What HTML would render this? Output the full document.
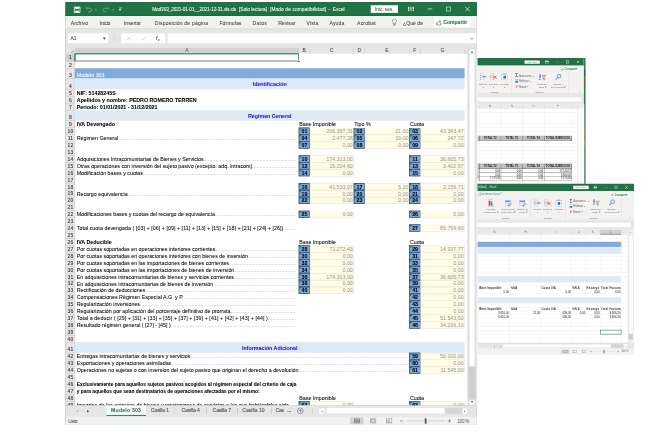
<!DOCTYPE html>
<html lang="es"><head><meta charset="utf-8"><title>Mod303 - Excel</title>
<style>
html{font-size:8px}
body{margin:0;background:#fff;width:650px;height:433px;overflow:hidden;position:relative;font-family:"Liberation Sans",sans-serif}
#stage{position:absolute;left:0;top:0;width:650rem;height:433rem;transform:scale(.125);transform-origin:0 0;overflow:hidden}
#stage div,#stage span,#stage svg{position:absolute;box-sizing:border-box}
.t{white-space:pre;-webkit-text-stroke:.05rem}
.t.s{-webkit-text-stroke:0}
.cell{white-space:nowrap;overflow:hidden;-webkit-text-stroke:.05rem}
</style></head>
<body>
<div id="stage">
<div id="w2" style="left:0;top:0;width:650rem;height:433rem">
<div style="left:583.4rem;top:58rem;width:2.1rem;height:128rem;background:#2a7a4d;"></div>
<div style="left:583.9rem;top:128rem;width:1.4rem;height:6rem;background:#8a6d3b;"></div>
<div style="left:583.9rem;top:139rem;width:1.4rem;height:7rem;background:#9b7a45;"></div>
<div style="left:583.9rem;top:70rem;width:1.4rem;height:6rem;background:#4a4a6a;"></div>
<div style="left:583.9rem;top:80rem;width:1.4rem;height:4rem;background:#7a5a3a;"></div>
<div style="left:476.6rem;top:58rem;width:107rem;height:128rem;background:#fff;"></div>
<div style="left:476.6rem;top:58rem;width:107rem;height:7.6rem;background:#217346;"></div>
<div style="left:524.6rem;top:60.5rem;width:15.2rem;height:3.2rem;background:#fff;"></div>
<span class="t s" style="top:60.7rem;font-size:2.5rem;line-height:3rem;color:#217346;left:527.2rem;letter-spacing:0.01rem;">Inic. ses.</span>
<div style="left:545.5rem;top:60.7rem;width:3rem;height:2.5rem;border:.45rem solid #fff"></div>
<div style="left:545.5rem;top:61.3rem;width:3rem;height:0.6rem;background:#fff;"></div>
<div style="left:556rem;top:61.75rem;width:2.8rem;height:0.45rem;background:#5f9c7a;"></div>
<div style="left:566.2rem;top:60.6rem;width:2.8rem;height:2.7rem;border:.45rem solid #fff"></div>
<svg style="left:576.5rem;top:60.4rem;width:3rem;height:3rem" viewBox="0 0 30 30"><path d="M3 3l24 24M27 3l-24 24" stroke="#fff" stroke-width="5"/></svg>
<div style="left:476.6rem;top:65.6rem;width:107rem;height:28.4rem;background:#f3f2f1;"></div>
<div style="left:476.6rem;top:93.6rem;width:107rem;height:0.5rem;background:#d2d0ce;"></div>
<div style="left:559.6rem;top:67.5rem;width:19.6rem;height:3.7rem;background:#fff;"></div>
<span class="t s" style="top:67.78rem;font-size:2.7rem;line-height:3.24rem;color:#217346;font-weight:bold;left:564.6rem;letter-spacing:0.01rem;">Compartir</span>
<svg style="left:561rem;top:68rem;width:3rem;height:2.8rem" viewBox="0 0 60 60"><path d="M6 30v24h40v-24" fill="none" stroke="#217346" stroke-width="8"/><path d="M14 40c4-16 14-24 30-24M34 6l12 10l-12 10" fill="none" stroke="#217346" stroke-width="8"/></svg>
<div style="left:480.4rem;top:73.8rem;width:3.2rem;height:6.2rem;background:#fff;border:.35rem solid #7d7d7d"></div>
<div style="left:480.4rem;top:75.8rem;width:3.2rem;height:2.1rem;background:#cfe0f3;border:.3rem solid #7d7d7d"></div>
<div style="left:483.2rem;top:76.35rem;width:3rem;height:0.9rem;background:#3a7bc8;"></div>
<span class="t s" style="top:82.2rem;font-size:2.5rem;line-height:3rem;color:#6e6e6e;left:383rem;width:200rem;text-align:center;">Insertar</span>
<span class="t s" style="top:85.8rem;font-size:2rem;line-height:2.4rem;color:#6e6e6e;left:383rem;width:200rem;text-align:center;">▾</span>
<div style="left:490.8rem;top:73.8rem;width:3.2rem;height:6.2rem;background:#fff;border:.35rem solid #7d7d7d"></div>
<div style="left:490.8rem;top:75.8rem;width:3.2rem;height:2.1rem;background:#cfe0f3;border:.3rem solid #7d7d7d"></div>
<svg style="left:493rem;top:75.2rem;width:4rem;height:4rem" viewBox="0 0 40 40"><path d="M4 4l32 32M36 4l-32 32" stroke="#e03c31" stroke-width="8"/></svg>
<span class="t s" style="top:82.2rem;font-size:2.5rem;line-height:3rem;color:#6e6e6e;left:393.6rem;width:200rem;text-align:center;">Eliminar</span>
<span class="t s" style="top:85.8rem;font-size:2rem;line-height:2.4rem;color:#6e6e6e;left:393.6rem;width:200rem;text-align:center;">▾</span>
<div style="left:501.7rem;top:74.2rem;width:5.8rem;height:5.8rem;background:#fff;border:.35rem solid #7d7d7d"></div>
<div style="left:503.4rem;top:75.8rem;width:2.6rem;height:2.8rem;background:#2e75b6;"></div>
<div style="left:502.8rem;top:73.6rem;width:3.6rem;height:0.7rem;background:#5b9bd5;"></div>
<span class="t s" style="top:82.2rem;font-size:2.5rem;line-height:3rem;color:#6e6e6e;left:404.6rem;width:200rem;text-align:center;">Formato</span>
<span class="t s" style="top:85.8rem;font-size:2rem;line-height:2.4rem;color:#6e6e6e;left:404.6rem;width:200rem;text-align:center;">▾</span>
<span class="t s" style="top:90.8rem;font-size:2.5rem;line-height:3rem;color:#6e6e6e;left:394.3rem;width:200rem;text-align:center;">Celdas</span>
<div style="left:511.5rem;top:73.5rem;width:0.3rem;height:19rem;background:#cfcdcb;"></div>
<span class="t" style="top:73rem;font-size:4.5rem;line-height:5.4rem;color:#333;left:515.2rem;">Σ</span>
<span class="t s" style="top:74rem;font-size:3rem;line-height:3.6rem;color:#6e6e6e;left:519rem;letter-spacing:-0.16rem;">Autosuma</span>
<span class="t s" style="top:74.26rem;font-size:2.4rem;line-height:2.88rem;color:#666;left:533.4rem;">▾</span>
<div style="left:515.4rem;top:79.6rem;width:2.6rem;height:3rem;background:#fff;border:.3rem solid #777"></div>
<div style="left:515.4rem;top:80.9rem;width:2.6rem;height:1.7rem;background:#2e75b6;"></div>
<span class="t s" style="top:79.4rem;font-size:3rem;line-height:3.6rem;color:#6e6e6e;left:519rem;letter-spacing:-0.18rem;">Rellenar</span>
<span class="t s" style="top:79.66rem;font-size:2.4rem;line-height:2.88rem;color:#666;left:529.6rem;">▾</span>
<svg style="left:515.2rem;top:85rem;width:3.2rem;height:3rem" viewBox="0 0 32 30"><path d="M4 26l10-22h12l-10 22z" fill="#e0457b"/></svg>
<span class="t s" style="top:84.8rem;font-size:3rem;line-height:3.6rem;color:#6e6e6e;left:519rem;letter-spacing:-0.16rem;">Borrar</span>
<span class="t s" style="top:85.06rem;font-size:2.4rem;line-height:2.88rem;color:#666;left:527.4rem;">▾</span>
<span class="t s" style="top:74.18rem;font-size:2.88rem;line-height:3.45rem;color:#2e75b6;font-weight:bold;left:539.1rem;">A</span>
<span class="t s" style="top:77.18rem;font-size:2.88rem;line-height:3.45rem;color:#7030a0;font-weight:bold;left:539.1rem;">Z</span>
<svg style="left:541.6rem;top:75rem;width:4.4rem;height:5.6rem" viewBox="0 0 44 56"><path d="M3 5h38l-14 19v26l-10-7v-19z" fill="#f3f2f1" stroke="#555" stroke-width="5"/></svg>
<span class="t s" style="top:82.2rem;font-size:2.5rem;line-height:3rem;color:#6e6e6e;left:442.4rem;width:200rem;text-align:center;">Ordenar y</span>
<span class="t s" style="top:85.6rem;font-size:2.5rem;line-height:3rem;color:#6e6e6e;left:442.4rem;width:200rem;text-align:center;">filtrar ▾</span>
<svg style="left:555.1rem;top:73.8rem;width:6.6rem;height:6.6rem" viewBox="0 0 54 54"><circle cx="33" cy="20" r="15" fill="#fff" stroke="#2e75b6" stroke-width="6"/><path d="M22 31l-18 19" stroke="#2e75b6" stroke-width="8"/></svg>
<span class="t s" style="top:82.2rem;font-size:2.5rem;line-height:3rem;color:#6e6e6e;left:458.4rem;width:200rem;text-align:center;">Buscar y</span>
<span class="t s" style="top:85.6rem;font-size:2.5rem;line-height:3rem;color:#6e6e6e;left:458.4rem;width:200rem;text-align:center;">seleccionar ▾</span>
<span class="t s" style="top:90.8rem;font-size:2.5rem;line-height:3rem;color:#6e6e6e;left:439.6rem;width:200rem;text-align:center;">Edición</span>
<div style="left:568rem;top:73.5rem;width:0.3rem;height:19rem;background:#cfcdcb;"></div>
<span class="t s" style="top:90.64rem;font-size:2.6rem;line-height:3.12rem;color:#6e6e6e;left:480rem;width:200rem;text-align:center;">⌃</span>
<div style="left:476.6rem;top:94.1rem;width:107rem;height:10.3rem;background:#e6e6e6;"></div>
<div style="left:476.6rem;top:97.4rem;width:104.8rem;height:4.1rem;background:#fff;"></div>
<span class="t s" style="top:98.06rem;font-size:2.4rem;line-height:2.88rem;color:#6e6e6e;left:479.6rem;width:200rem;text-align:center;">⌄</span>
<div style="left:476.6rem;top:104.4rem;width:100.8rem;height:4.1rem;background:#e9e9e9;"></div>
<span class="t s" style="top:104.82rem;font-size:2.8rem;line-height:3.36rem;color:#6e6e6e;left:390rem;width:200rem;text-align:center;">M</span>
<span class="t s" style="top:104.82rem;font-size:2.8rem;line-height:3.36rem;color:#6e6e6e;left:411.8rem;width:200rem;text-align:center;">N</span>
<span class="t s" style="top:104.82rem;font-size:2.8rem;line-height:3.36rem;color:#6e6e6e;left:433.4rem;width:200rem;text-align:center;">O</span>
<span class="t s" style="top:104.82rem;font-size:2.8rem;line-height:3.36rem;color:#6e6e6e;left:458rem;width:200rem;text-align:center;">P</span>
<div style="left:479.08rem;top:104.8rem;width:0.24rem;height:3.7rem;background:#bdbdbd;"></div>
<div style="left:500.88rem;top:104.8rem;width:0.24rem;height:3.7rem;background:#bdbdbd;"></div>
<div style="left:522.38rem;top:104.8rem;width:0.24rem;height:3.7rem;background:#bdbdbd;"></div>
<div style="left:543.98rem;top:104.8rem;width:0.24rem;height:3.7rem;background:#bdbdbd;"></div>
<div style="left:571.68rem;top:104.8rem;width:0.24rem;height:3.7rem;background:#bdbdbd;"></div>
<div style="left:476.6rem;top:108.4rem;width:100.8rem;height:0.2rem;background:#dadada;"></div>
<div style="left:476.6rem;top:112.25rem;width:100.8rem;height:0.2rem;background:#dadada;"></div>
<div style="left:476.6rem;top:116.1rem;width:100.8rem;height:0.2rem;background:#dadada;"></div>
<div style="left:476.6rem;top:119.95rem;width:100.8rem;height:0.2rem;background:#dadada;"></div>
<div style="left:476.6rem;top:123.8rem;width:100.8rem;height:0.2rem;background:#dadada;"></div>
<div style="left:476.6rem;top:127.65rem;width:100.8rem;height:0.2rem;background:#dadada;"></div>
<div style="left:476.6rem;top:131.5rem;width:100.8rem;height:0.2rem;background:#dadada;"></div>
<div style="left:476.6rem;top:135.35rem;width:100.8rem;height:0.2rem;background:#dadada;"></div>
<div style="left:476.6rem;top:139.2rem;width:100.8rem;height:0.2rem;background:#dadada;"></div>
<div style="left:476.6rem;top:143.05rem;width:100.8rem;height:0.2rem;background:#dadada;"></div>
<div style="left:476.6rem;top:146.9rem;width:100.8rem;height:0.2rem;background:#dadada;"></div>
<div style="left:476.6rem;top:150.75rem;width:100.8rem;height:0.2rem;background:#dadada;"></div>
<div style="left:476.6rem;top:154.6rem;width:100.8rem;height:0.2rem;background:#dadada;"></div>
<div style="left:476.6rem;top:158.45rem;width:100.8rem;height:0.2rem;background:#dadada;"></div>
<div style="left:476.6rem;top:162.3rem;width:100.8rem;height:0.2rem;background:#dadada;"></div>
<div style="left:476.6rem;top:166.15rem;width:100.8rem;height:0.2rem;background:#dadada;"></div>
<div style="left:476.6rem;top:170rem;width:100.8rem;height:0.2rem;background:#dadada;"></div>
<div style="left:476.6rem;top:173.85rem;width:100.8rem;height:0.2rem;background:#dadada;"></div>
<div style="left:476.6rem;top:177.7rem;width:100.8rem;height:0.2rem;background:#dadada;"></div>
<div style="left:476.6rem;top:181.55rem;width:100.8rem;height:0.2rem;background:#dadada;"></div>
<div style="left:479.1rem;top:108.5rem;width:0.2rem;height:75.5rem;background:#dadada;"></div>
<div style="left:500.9rem;top:108.5rem;width:0.2rem;height:75.5rem;background:#dadada;"></div>
<div style="left:522.4rem;top:108.5rem;width:0.2rem;height:75.5rem;background:#dadada;"></div>
<div style="left:544rem;top:108.5rem;width:0.2rem;height:75.5rem;background:#dadada;"></div>
<div style="left:571.7rem;top:108.5rem;width:0.2rem;height:75.5rem;background:#dadada;"></div>
<div style="left:577.4rem;top:104.4rem;width:6rem;height:81.6rem;background:#fff;"></div>
<div style="left:577.4rem;top:104.4rem;width:6rem;height:4.1rem;background:#ececec;"></div>
<div style="left:577.3rem;top:104.4rem;width:0.3rem;height:81.6rem;background:#c8c8c8;"></div>
<div style="left:580.6rem;top:108.5rem;width:0.3rem;height:77.5rem;background:#dedede;"></div>
<div style="left:476.6rem;top:135.8rem;width:95.3rem;height:5rem;background:#bfbfbf;border-top:.3rem solid #333;border-bottom:.3rem solid #333"></div>
<div style="left:479.05rem;top:135.8rem;width:0.3rem;height:5rem;background:#333;"></div>
<div style="left:500.85rem;top:135.8rem;width:0.3rem;height:5rem;background:#333;"></div>
<div style="left:522.35rem;top:135.8rem;width:0.3rem;height:5rem;background:#333;"></div>
<div style="left:543.95rem;top:135.8rem;width:0.3rem;height:5rem;background:#333;"></div>
<div style="left:571.65rem;top:135.8rem;width:0.3rem;height:5rem;background:#333;"></div>
<span class="t s" style="top:136.77rem;font-size:2.72rem;line-height:3.26rem;color:#222;font-weight:bold;left:390.1rem;width:200rem;text-align:center;">TOTAL T2</span>
<span class="t s" style="top:136.77rem;font-size:2.72rem;line-height:3.26rem;color:#222;font-weight:bold;left:411.75rem;width:200rem;text-align:center;">TOTAL T3</span>
<span class="t s" style="top:136.77rem;font-size:2.72rem;line-height:3.26rem;color:#222;font-weight:bold;left:433.3rem;width:200rem;text-align:center;">TOTAL T4</span>
<span class="t s" style="top:136.77rem;font-size:2.72rem;line-height:3.26rem;color:#222;font-weight:bold;left:457.95rem;width:200rem;text-align:center;">TOTAL EJERCICIO</span>
<div style="left:476.6rem;top:163.6rem;width:95.3rem;height:5.4rem;background:#bfbfbf;border-top:.3rem solid #333;border-bottom:.3rem solid #333"></div>
<div style="left:479.05rem;top:163.6rem;width:0.3rem;height:5.4rem;background:#333;"></div>
<div style="left:500.85rem;top:163.6rem;width:0.3rem;height:5.4rem;background:#333;"></div>
<div style="left:522.35rem;top:163.6rem;width:0.3rem;height:5.4rem;background:#333;"></div>
<div style="left:543.95rem;top:163.6rem;width:0.3rem;height:5.4rem;background:#333;"></div>
<div style="left:571.65rem;top:163.6rem;width:0.3rem;height:5.4rem;background:#333;"></div>
<span class="t s" style="top:164.77rem;font-size:2.72rem;line-height:3.26rem;color:#222;font-weight:bold;left:390.1rem;width:200rem;text-align:center;">TOTAL T2</span>
<span class="t s" style="top:164.77rem;font-size:2.72rem;line-height:3.26rem;color:#222;font-weight:bold;left:411.75rem;width:200rem;text-align:center;">TOTAL T3</span>
<span class="t s" style="top:164.77rem;font-size:2.72rem;line-height:3.26rem;color:#222;font-weight:bold;left:433.3rem;width:200rem;text-align:center;">TOTAL T4</span>
<span class="t s" style="top:164.77rem;font-size:2.72rem;line-height:3.26rem;color:#222;font-weight:bold;left:457.95rem;width:200rem;text-align:center;">TOTAL EJERCICIO</span>
<div style="left:476.6rem;top:172.65rem;width:95.3rem;height:0.3rem;background:#444;"></div>
<div style="left:479.05rem;top:169rem;width:0.3rem;height:3.8rem;background:#444;"></div>
<div style="left:500.85rem;top:169rem;width:0.3rem;height:3.8rem;background:#444;"></div>
<div style="left:522.35rem;top:169rem;width:0.3rem;height:3.8rem;background:#444;"></div>
<div style="left:543.95rem;top:169rem;width:0.3rem;height:3.8rem;background:#444;"></div>
<div style="left:571.65rem;top:169rem;width:0.3rem;height:3.8rem;background:#444;"></div>
<span class="t s" style="top:169.44rem;font-size:2.6rem;line-height:3.12rem;color:#222;left:300.2rem;width:200rem;text-align:right;">0,00</span>
<span class="t s" style="top:169.44rem;font-size:2.6rem;line-height:3.12rem;color:#222;left:321.7rem;width:200rem;text-align:right;">0,00</span>
<span class="t s" style="top:169.44rem;font-size:2.6rem;line-height:3.12rem;color:#222;left:343.3rem;width:200rem;text-align:right;">0,00</span>
<span class="t s" style="top:169.44rem;font-size:2.6rem;line-height:3.12rem;color:#222;left:371rem;width:200rem;text-align:right;">17.140,72</span>
<span class="t s" style="top:169.44rem;font-size:2.6rem;line-height:3.12rem;color:#222;left:278.8rem;width:200rem;text-align:right;">72</span>
<div style="left:476.6rem;top:176.45rem;width:95.3rem;height:0.3rem;background:#444;"></div>
<div style="left:479.05rem;top:172.8rem;width:0.3rem;height:3.8rem;background:#444;"></div>
<div style="left:500.85rem;top:172.8rem;width:0.3rem;height:3.8rem;background:#444;"></div>
<div style="left:522.35rem;top:172.8rem;width:0.3rem;height:3.8rem;background:#444;"></div>
<div style="left:543.95rem;top:172.8rem;width:0.3rem;height:3.8rem;background:#444;"></div>
<div style="left:571.65rem;top:172.8rem;width:0.3rem;height:3.8rem;background:#444;"></div>
<span class="t s" style="top:173.24rem;font-size:2.6rem;line-height:3.12rem;color:#222;left:300.2rem;width:200rem;text-align:right;">0,00</span>
<span class="t s" style="top:173.24rem;font-size:2.6rem;line-height:3.12rem;color:#222;left:321.7rem;width:200rem;text-align:right;">0,00</span>
<span class="t s" style="top:173.24rem;font-size:2.6rem;line-height:3.12rem;color:#222;left:343.3rem;width:200rem;text-align:right;">0,00</span>
<span class="t s" style="top:173.24rem;font-size:2.6rem;line-height:3.12rem;color:#222;left:371rem;width:200rem;text-align:right;">3.600,00</span>
<span class="t s" style="top:173.24rem;font-size:2.6rem;line-height:3.12rem;color:#222;left:278.8rem;width:200rem;text-align:right;">00</span>
<div style="left:476.6rem;top:180.25rem;width:95.3rem;height:0.3rem;background:#444;"></div>
<div style="left:479.05rem;top:176.6rem;width:0.3rem;height:3.8rem;background:#444;"></div>
<div style="left:500.85rem;top:176.6rem;width:0.3rem;height:3.8rem;background:#444;"></div>
<div style="left:522.35rem;top:176.6rem;width:0.3rem;height:3.8rem;background:#444;"></div>
<div style="left:543.95rem;top:176.6rem;width:0.3rem;height:3.8rem;background:#444;"></div>
<div style="left:571.65rem;top:176.6rem;width:0.3rem;height:3.8rem;background:#444;"></div>
<span class="t s" style="top:177.04rem;font-size:2.6rem;line-height:3.12rem;color:#222;left:300.2rem;width:200rem;text-align:right;">7.175,30</span>
<span class="t s" style="top:177.04rem;font-size:2.6rem;line-height:3.12rem;color:#222;left:321.7rem;width:200rem;text-align:right;">0,00</span>
<span class="t s" style="top:177.04rem;font-size:2.6rem;line-height:3.12rem;color:#222;left:343.3rem;width:200rem;text-align:right;">0,00</span>
<span class="t s" style="top:177.04rem;font-size:2.6rem;line-height:3.12rem;color:#222;left:371rem;width:200rem;text-align:right;">7.175,30</span>
<span class="t s" style="top:177.04rem;font-size:2.6rem;line-height:3.12rem;color:#222;left:278.8rem;width:200rem;text-align:right;">30</span>
</div>
<div id="w3" style="left:0;top:0;width:650rem;height:433rem">
<div style="left:476.6rem;top:183.5rem;width:157.4rem;height:170.7rem;background:#fff;border-right:.3rem solid #9cbfaa;border-bottom:.3rem solid #9cbfaa"></div>
<div style="left:476.6rem;top:183.5rem;width:157.4rem;height:7.7rem;background:#217346;"></div>
<div style="left:573.3rem;top:185.7rem;width:15.3rem;height:3.4rem;background:#fff;"></div>
<span class="t s" style="top:186rem;font-size:2.5rem;line-height:3rem;color:#217346;left:575.9rem;letter-spacing:0.02rem;">Inic. ses.</span>
<div style="left:593.9rem;top:186.25rem;width:3rem;height:2.5rem;border:.45rem solid #fff"></div>
<div style="left:593.9rem;top:186.85rem;width:3rem;height:0.6rem;background:#fff;"></div>
<div style="left:604.8rem;top:187.3rem;width:2.8rem;height:0.45rem;background:#5f9c7a;"></div>
<div style="left:614.8rem;top:186.15rem;width:2.8rem;height:2.7rem;border:.45rem solid #fff"></div>
<svg style="left:625rem;top:185.95rem;width:3rem;height:3rem" viewBox="0 0 30 30"><path d="M3 3l24 24M27 3l-24 24" stroke="#fff" stroke-width="5"/></svg>
<span class="t s" style="top:185.83rem;font-size:2.7rem;line-height:3.24rem;color:#cfe3d7;left:478rem;letter-spacing:-0.09rem;">ibilidad]  -  Excel</span>
<div style="left:476.6rem;top:191.2rem;width:157.1rem;height:29.1rem;background:#f3f2f1;"></div>
<div style="left:476.6rem;top:219.9rem;width:157.1rem;height:0.5rem;background:#d2d0ce;"></div>
<span class="t s" style="top:192.88rem;font-size:2.7rem;line-height:3.24rem;color:#6e6e6e;left:477.6rem;letter-spacing:0.01rem;">¿Qué desea hacer?</span>
<div style="left:609.4rem;top:192.6rem;width:20rem;height:4rem;background:#fff;"></div>
<span class="t s" style="top:193.08rem;font-size:2.7rem;line-height:3.24rem;color:#217346;font-weight:bold;left:614.6rem;letter-spacing:0.03rem;">Compartir</span>
<svg style="left:610.8rem;top:193.2rem;width:3rem;height:2.8rem" viewBox="0 0 60 60"><path d="M6 30v24h40v-24" fill="none" stroke="#217346" stroke-width="8"/><path d="M14 40c4-16 14-24 30-24M34 6l12 10l-12 10" fill="none" stroke="#217346" stroke-width="8"/></svg>
<div style="left:488.2rem;top:199.8rem;width:4.8rem;height:6.6rem;background:#fff;border:.35rem solid #7d7d7d"></div>
<div style="left:488.8rem;top:200.6rem;width:1.6rem;height:5rem;background:#e8413c;"></div>
<div style="left:490.6rem;top:201.4rem;width:1.4rem;height:4.2rem;background:#3a7bc8;"></div>
<svg style="left:491.4rem;top:203.6rem;width:3rem;height:3rem" viewBox="0 0 30 30"><path d="M4 26l8-22l14 22z" fill="#fff" stroke="#555" stroke-width="3"/></svg>
<span class="t s" style="top:207.3rem;font-size:2.5rem;line-height:3rem;color:#6e6e6e;left:390.8rem;width:200rem;text-align:center;">Formato</span>
<span class="t s" style="top:210.6rem;font-size:2.5rem;line-height:3rem;color:#6e6e6e;left:390.8rem;width:200rem;text-align:center;">condicional ▾</span>
<div style="left:505.2rem;top:200.6rem;width:5.2rem;height:5rem;background:#fff;border:.35rem solid #7d7d7d"></div>
<div style="left:505.2rem;top:200.6rem;width:5.2rem;height:1.6rem;background:#5b9bd5;"></div>
<div style="left:505.2rem;top:203.4rem;width:5.2rem;height:1rem;background:#bdd7ee;"></div>
<svg style="left:507.8rem;top:202.4rem;width:4.4rem;height:4.4rem" viewBox="0 0 44 44"><path d="M4 40l6-14l20-20l8 8l-20 20z" fill="#dfe7f2" stroke="#555" stroke-width="4"/><path d="M4 40l6-14l8 8z" fill="#2e75b6"/></svg>
<span class="t s" style="top:207.3rem;font-size:2.5rem;line-height:3rem;color:#6e6e6e;left:408.2rem;width:200rem;text-align:center;">Dar formato</span>
<span class="t s" style="top:210.6rem;font-size:2.5rem;line-height:3rem;color:#6e6e6e;left:408.2rem;width:200rem;text-align:center;">como tabla ▾</span>
<div style="left:519.8rem;top:200.6rem;width:5.2rem;height:5rem;background:#fff;border:.35rem solid #7d7d7d"></div>
<div style="left:519.8rem;top:200.6rem;width:5.2rem;height:1.6rem;background:#5b9bd5;"></div>
<div style="left:519.8rem;top:203.4rem;width:5.2rem;height:1rem;background:#bdd7ee;"></div>
<svg style="left:522.4rem;top:202.4rem;width:4.4rem;height:4.4rem" viewBox="0 0 44 44"><path d="M4 40l6-14l20-20l8 8l-20 20z" fill="#dfe7f2" stroke="#555" stroke-width="4"/><path d="M4 40l6-14l8 8z" fill="#2e75b6"/></svg>
<span class="t s" style="top:207.3rem;font-size:2.5rem;line-height:3rem;color:#6e6e6e;left:422.8rem;width:200rem;text-align:center;">Estilos de</span>
<span class="t s" style="top:210.6rem;font-size:2.5rem;line-height:3rem;color:#6e6e6e;left:422.8rem;width:200rem;text-align:center;">celda ▾</span>
<span class="t s" style="top:216.6rem;font-size:2.5rem;line-height:3rem;color:#6e6e6e;left:405.4rem;width:200rem;text-align:center;">Estilos</span>
<div style="left:530.3rem;top:199.5rem;width:0.3rem;height:19rem;background:#cfcdcb;"></div>
<div style="left:534.7rem;top:200rem;width:3.2rem;height:6.2rem;background:#fff;border:.35rem solid #7d7d7d"></div>
<div style="left:534.7rem;top:202rem;width:3.2rem;height:2.1rem;background:#cfe0f3;border:.3rem solid #7d7d7d"></div>
<div style="left:537.5rem;top:202.55rem;width:3rem;height:0.9rem;background:#3a7bc8;"></div>
<span class="t s" style="top:207.3rem;font-size:2.5rem;line-height:3rem;color:#6e6e6e;left:437.3rem;width:200rem;text-align:center;">Insertar</span>
<span class="t s" style="top:211rem;font-size:2rem;line-height:2.4rem;color:#6e6e6e;left:437.3rem;width:200rem;text-align:center;">▾</span>
<div style="left:544.9rem;top:200rem;width:3.2rem;height:6.2rem;background:#fff;border:.35rem solid #7d7d7d"></div>
<div style="left:544.9rem;top:202rem;width:3.2rem;height:2.1rem;background:#cfe0f3;border:.3rem solid #7d7d7d"></div>
<svg style="left:547.1rem;top:201.4rem;width:4rem;height:4rem" viewBox="0 0 40 40"><path d="M4 4l32 32M36 4l-32 32" stroke="#e03c31" stroke-width="8"/></svg>
<span class="t s" style="top:207.3rem;font-size:2.5rem;line-height:3rem;color:#6e6e6e;left:447.7rem;width:200rem;text-align:center;">Eliminar</span>
<span class="t s" style="top:211rem;font-size:2rem;line-height:2.4rem;color:#6e6e6e;left:447.7rem;width:200rem;text-align:center;">▾</span>
<div style="left:555.9rem;top:200.4rem;width:5.8rem;height:5.8rem;background:#fff;border:.35rem solid #7d7d7d"></div>
<div style="left:557.6rem;top:202rem;width:2.6rem;height:2.8rem;background:#2e75b6;"></div>
<div style="left:557rem;top:199.8rem;width:3.6rem;height:0.7rem;background:#5b9bd5;"></div>
<span class="t s" style="top:207.3rem;font-size:2.5rem;line-height:3rem;color:#6e6e6e;left:458.8rem;width:200rem;text-align:center;">Formato</span>
<span class="t s" style="top:211rem;font-size:2rem;line-height:2.4rem;color:#6e6e6e;left:458.8rem;width:200rem;text-align:center;">▾</span>
<span class="t s" style="top:216.6rem;font-size:2.5rem;line-height:3rem;color:#6e6e6e;left:447.7rem;width:200rem;text-align:center;">Celdas</span>
<div style="left:565.4rem;top:199.5rem;width:0.3rem;height:19rem;background:#cfcdcb;"></div>
<span class="t" style="top:198.3rem;font-size:4.5rem;line-height:5.4rem;color:#333;left:569.4rem;">Σ</span>
<span class="t s" style="top:199.3rem;font-size:3rem;line-height:3.6rem;color:#6e6e6e;left:573.2rem;letter-spacing:-0.16rem;">Autosuma</span>
<span class="t s" style="top:199.56rem;font-size:2.4rem;line-height:2.88rem;color:#666;left:587.6rem;">▾</span>
<div style="left:569.6rem;top:204.8rem;width:2.6rem;height:3rem;background:#fff;border:.3rem solid #777"></div>
<div style="left:569.6rem;top:206.1rem;width:2.6rem;height:1.7rem;background:#2e75b6;"></div>
<span class="t s" style="top:204.6rem;font-size:3rem;line-height:3.6rem;color:#6e6e6e;left:573.2rem;letter-spacing:-0.18rem;">Rellenar</span>
<span class="t s" style="top:204.86rem;font-size:2.4rem;line-height:2.88rem;color:#666;left:583.8rem;">▾</span>
<svg style="left:569.4rem;top:210.1rem;width:3.2rem;height:3rem" viewBox="0 0 32 30"><path d="M4 26l10-22h12l-10 22z" fill="#e0457b"/></svg>
<span class="t s" style="top:209.9rem;font-size:3rem;line-height:3.6rem;color:#6e6e6e;left:573.2rem;letter-spacing:-0.16rem;">Borrar</span>
<span class="t s" style="top:210.16rem;font-size:2.4rem;line-height:2.88rem;color:#666;left:581.6rem;">▾</span>
<span class="t s" style="top:199.58rem;font-size:2.88rem;line-height:3.45rem;color:#2e75b6;font-weight:bold;left:592.9rem;">A</span>
<span class="t s" style="top:202.58rem;font-size:2.88rem;line-height:3.45rem;color:#7030a0;font-weight:bold;left:592.9rem;">Z</span>
<svg style="left:595.4rem;top:200.4rem;width:4.4rem;height:5.6rem" viewBox="0 0 44 56"><path d="M3 5h38l-14 19v26l-10-7v-19z" fill="#f3f2f1" stroke="#555" stroke-width="5"/></svg>
<span class="t s" style="top:207.3rem;font-size:2.5rem;line-height:3rem;color:#6e6e6e;left:496.2rem;width:200rem;text-align:center;">Ordenar y</span>
<span class="t s" style="top:210.6rem;font-size:2.5rem;line-height:3rem;color:#6e6e6e;left:496.2rem;width:200rem;text-align:center;">filtrar ▾</span>
<svg style="left:608.7rem;top:199.2rem;width:6.6rem;height:6.6rem" viewBox="0 0 54 54"><circle cx="33" cy="20" r="15" fill="#fff" stroke="#2e75b6" stroke-width="6"/><path d="M22 31l-18 19" stroke="#2e75b6" stroke-width="8"/></svg>
<span class="t s" style="top:207.3rem;font-size:2.5rem;line-height:3rem;color:#6e6e6e;left:512rem;width:200rem;text-align:center;">Buscar y</span>
<span class="t s" style="top:210.6rem;font-size:2.5rem;line-height:3rem;color:#6e6e6e;left:512rem;width:200rem;text-align:center;">seleccionar ▾</span>
<span class="t s" style="top:216.6rem;font-size:2.5rem;line-height:3rem;color:#6e6e6e;left:493.4rem;width:200rem;text-align:center;">Edición</span>
<div style="left:621.7rem;top:199.5rem;width:0.3rem;height:19rem;background:#cfcdcb;"></div>
<span class="t s" style="top:216.66rem;font-size:2.4rem;line-height:2.88rem;color:#777;left:379rem;width:200rem;text-align:center;">⌟</span>
<span class="t s" style="top:216.44rem;font-size:2.6rem;line-height:3.12rem;color:#6e6e6e;left:530rem;width:200rem;text-align:center;">⌃</span>
<div style="left:476.6rem;top:220.4rem;width:157.1rem;height:9.4rem;background:#e6e6e6;"></div>
<div style="left:476.6rem;top:222.5rem;width:154rem;height:4.8rem;background:#fff;"></div>
<span class="t s" style="top:223.56rem;font-size:2.4rem;line-height:2.88rem;color:#6e6e6e;left:529rem;width:200rem;text-align:center;">⌄</span>
<div style="left:476.6rem;top:229.8rem;width:151.2rem;height:4.6rem;background:#e9e9e9;"></div>
<div style="left:600.2rem;top:229.8rem;width:20.8rem;height:4.6rem;background:#d2d2d2;"></div>
<div style="left:600.2rem;top:233.9rem;width:20.8rem;height:0.6rem;background:#217346;"></div>
<span class="t s" style="top:230.42rem;font-size:2.8rem;line-height:3.36rem;color:#6e6e6e;left:394.4rem;width:200rem;text-align:center;">G</span>
<span class="t s" style="top:230.42rem;font-size:2.8rem;line-height:3.36rem;color:#6e6e6e;left:425.4rem;width:200rem;text-align:center;">H</span>
<span class="t s" style="top:230.42rem;font-size:2.8rem;line-height:3.36rem;color:#6e6e6e;left:456.4rem;width:200rem;text-align:center;">I</span>
<span class="t s" style="top:230.42rem;font-size:2.8rem;line-height:3.36rem;color:#6e6e6e;left:478.8rem;width:200rem;text-align:center;">J</span>
<span class="t s" style="top:230.42rem;font-size:2.8rem;line-height:3.36rem;color:#6e6e6e;left:493rem;width:200rem;text-align:center;">K</span>
<span class="t s" style="top:230.42rem;font-size:2.8rem;line-height:3.36rem;color:#6e6e6e;left:510.6rem;width:200rem;text-align:center;">L</span>
<div style="left:478.18rem;top:230.2rem;width:0.24rem;height:4.2rem;background:#bdbdbd;"></div>
<div style="left:509.48rem;top:230.2rem;width:0.24rem;height:4.2rem;background:#bdbdbd;"></div>
<div style="left:540.48rem;top:230.2rem;width:0.24rem;height:4.2rem;background:#bdbdbd;"></div>
<div style="left:571.48rem;top:230.2rem;width:0.24rem;height:4.2rem;background:#bdbdbd;"></div>
<div style="left:585.68rem;top:230.2rem;width:0.24rem;height:4.2rem;background:#bdbdbd;"></div>
<div style="left:600.08rem;top:230.2rem;width:0.24rem;height:4.2rem;background:#bdbdbd;"></div>
<div style="left:620.88rem;top:230.2rem;width:0.24rem;height:4.2rem;background:#bdbdbd;"></div>
<div style="left:476.6rem;top:234.3rem;width:151.2rem;height:0.2rem;background:#dcdcdc;"></div>
<div style="left:476.6rem;top:238.05rem;width:151.2rem;height:0.2rem;background:#dcdcdc;"></div>
<div style="left:476.6rem;top:241.8rem;width:151.2rem;height:0.2rem;background:#dcdcdc;"></div>
<div style="left:476.6rem;top:246.8rem;width:151.2rem;height:0.2rem;background:#dcdcdc;"></div>
<div style="left:476.6rem;top:252.9rem;width:151.2rem;height:0.2rem;background:#dcdcdc;"></div>
<div style="left:476.6rem;top:256.75rem;width:151.2rem;height:0.2rem;background:#dcdcdc;"></div>
<div style="left:476.6rem;top:260.6rem;width:151.2rem;height:0.2rem;background:#dcdcdc;"></div>
<div style="left:476.6rem;top:264.45rem;width:151.2rem;height:0.2rem;background:#dcdcdc;"></div>
<div style="left:476.6rem;top:268.3rem;width:151.2rem;height:0.2rem;background:#dcdcdc;"></div>
<div style="left:476.6rem;top:272.15rem;width:151.2rem;height:0.2rem;background:#dcdcdc;"></div>
<div style="left:476.6rem;top:276rem;width:151.2rem;height:0.2rem;background:#dcdcdc;"></div>
<div style="left:476.6rem;top:282rem;width:151.2rem;height:0.2rem;background:#dcdcdc;"></div>
<div style="left:476.6rem;top:285.85rem;width:151.2rem;height:0.2rem;background:#dcdcdc;"></div>
<div style="left:476.6rem;top:289.7rem;width:151.2rem;height:0.2rem;background:#dcdcdc;"></div>
<div style="left:476.6rem;top:293.55rem;width:151.2rem;height:0.2rem;background:#dcdcdc;"></div>
<div style="left:476.6rem;top:297.4rem;width:151.2rem;height:0.2rem;background:#dcdcdc;"></div>
<div style="left:476.6rem;top:303.2rem;width:151.2rem;height:0.2rem;background:#dcdcdc;"></div>
<div style="left:476.6rem;top:307.05rem;width:151.2rem;height:0.2rem;background:#dcdcdc;"></div>
<div style="left:476.6rem;top:310.9rem;width:151.2rem;height:0.2rem;background:#dcdcdc;"></div>
<div style="left:476.6rem;top:314.75rem;width:151.2rem;height:0.2rem;background:#dcdcdc;"></div>
<div style="left:476.6rem;top:318.6rem;width:151.2rem;height:0.2rem;background:#dcdcdc;"></div>
<div style="left:476.6rem;top:322.45rem;width:151.2rem;height:0.2rem;background:#dcdcdc;"></div>
<div style="left:476.6rem;top:326.3rem;width:151.2rem;height:0.2rem;background:#dcdcdc;"></div>
<div style="left:476.6rem;top:330.15rem;width:151.2rem;height:0.2rem;background:#dcdcdc;"></div>
<div style="left:476.6rem;top:334rem;width:151.2rem;height:0.2rem;background:#dcdcdc;"></div>
<div style="left:476.6rem;top:337.85rem;width:151.2rem;height:0.2rem;background:#dcdcdc;"></div>
<div style="left:476.6rem;top:341.7rem;width:151.2rem;height:0.2rem;background:#dcdcdc;"></div>
<div style="left:478.2rem;top:234.4rem;width:0.2rem;height:108.6rem;background:#dcdcdc;"></div>
<div style="left:509.5rem;top:234.4rem;width:0.2rem;height:108.6rem;background:#dcdcdc;"></div>
<div style="left:540.5rem;top:234.4rem;width:0.2rem;height:108.6rem;background:#dcdcdc;"></div>
<div style="left:571.5rem;top:234.4rem;width:0.2rem;height:108.6rem;background:#dcdcdc;"></div>
<div style="left:585.7rem;top:234.4rem;width:0.2rem;height:108.6rem;background:#dcdcdc;"></div>
<div style="left:600.1rem;top:234.4rem;width:0.2rem;height:108.6rem;background:#dcdcdc;"></div>
<div style="left:620.9rem;top:234.4rem;width:0.2rem;height:108.6rem;background:#dcdcdc;"></div>
<div style="left:476.6rem;top:241.9rem;width:144.4rem;height:5rem;background:#7fabdb;"></div>
<div style="left:476.6rem;top:246.9rem;width:144.4rem;height:6.1rem;background:#deebf5;"></div>
<div style="left:476.6rem;top:276.1rem;width:144.4rem;height:6rem;background:#deebf5;"></div>
<div style="left:476.6rem;top:297.5rem;width:144.4rem;height:5.8rem;background:#deebf5;"></div>
<span class="t s" style="top:286.3rem;font-size:2.8rem;line-height:3.36rem;color:#333;font-weight:bold;left:479.2rem;letter-spacing:0.11rem;">Base Imponible</span>
<span class="t s" style="top:286.3rem;font-size:2.8rem;line-height:3.36rem;color:#333;font-weight:bold;left:510.4rem;letter-spacing:0.01rem;">%IVA</span>
<span class="t s" style="top:286.3rem;font-size:2.8rem;line-height:3.36rem;color:#333;font-weight:bold;left:541.4rem;letter-spacing:0.16rem;">Cuota IVA</span>
<span class="t s" style="top:286.3rem;font-size:2.8rem;line-height:3.36rem;color:#333;font-weight:bold;left:572.2rem;letter-spacing:0.05rem;">%R.E.</span>
<span class="t s" style="top:286.3rem;font-size:2.8rem;line-height:3.36rem;color:#333;font-weight:bold;left:586.6rem;letter-spacing:0.23rem;">Recargo</span>
<span class="t s" style="top:286.3rem;font-size:2.8rem;line-height:3.36rem;color:#333;font-weight:bold;left:601rem;letter-spacing:0.19rem;">Total Factura</span>
<span class="t s" style="top:290.12rem;font-size:2.85rem;line-height:3.42rem;color:#222;left:309.1rem;width:200rem;text-align:right;">0,00</span>
<span class="t s" style="top:290.12rem;font-size:2.85rem;line-height:3.42rem;color:#222;left:371.1rem;width:200rem;text-align:right;">0,00</span>
<span class="t s" style="top:290.12rem;font-size:2.85rem;line-height:3.42rem;color:#222;left:399.7rem;width:200rem;text-align:right;">0,00</span>
<span class="t s" style="top:290.12rem;font-size:2.85rem;line-height:3.42rem;color:#222;left:420.5rem;width:200rem;text-align:right;">0,00</span>
<span class="t s" style="top:307.5rem;font-size:2.8rem;line-height:3.36rem;color:#333;font-weight:bold;left:479.2rem;letter-spacing:0.11rem;">Base Imponible</span>
<span class="t s" style="top:307.5rem;font-size:2.8rem;line-height:3.36rem;color:#333;font-weight:bold;left:510.4rem;letter-spacing:0.01rem;">%IVA</span>
<span class="t s" style="top:307.5rem;font-size:2.8rem;line-height:3.36rem;color:#333;font-weight:bold;left:541.4rem;letter-spacing:0.16rem;">Cuota IVA</span>
<span class="t s" style="top:307.5rem;font-size:2.8rem;line-height:3.36rem;color:#333;font-weight:bold;left:572.2rem;letter-spacing:0.05rem;">%R.E.</span>
<span class="t s" style="top:307.5rem;font-size:2.8rem;line-height:3.36rem;color:#333;font-weight:bold;left:586.6rem;letter-spacing:0.23rem;">Recargo</span>
<span class="t s" style="top:307.5rem;font-size:2.8rem;line-height:3.36rem;color:#333;font-weight:bold;left:601rem;letter-spacing:0.19rem;">Total Factura</span>
<span class="t s" style="top:311.32rem;font-size:2.85rem;line-height:3.42rem;color:#222;left:309.1rem;width:200rem;text-align:right;">3.616,00</span>
<span class="t s" style="top:311.32rem;font-size:2.85rem;line-height:3.42rem;color:#222;left:340.1rem;width:200rem;text-align:right;">21,00</span>
<span class="t s" style="top:311.32rem;font-size:2.85rem;line-height:3.42rem;color:#222;left:371.1rem;width:200rem;text-align:right;">636,30</span>
<span class="t s" style="top:311.32rem;font-size:2.85rem;line-height:3.42rem;color:#222;left:385.3rem;width:200rem;text-align:right;">0,00</span>
<span class="t s" style="top:311.32rem;font-size:2.85rem;line-height:3.42rem;color:#222;left:399.7rem;width:200rem;text-align:right;">0,00</span>
<span class="t s" style="top:311.32rem;font-size:2.85rem;line-height:3.42rem;color:#222;left:420.5rem;width:200rem;text-align:right;">3.666,30</span>
<span class="t s" style="top:315.17rem;font-size:2.85rem;line-height:3.42rem;color:#222;left:309.1rem;width:200rem;text-align:right;">3.616,00</span>
<span class="t s" style="top:315.17rem;font-size:2.85rem;line-height:3.42rem;color:#222;left:371.1rem;width:200rem;text-align:right;">636,30</span>
<span class="t s" style="top:315.17rem;font-size:2.85rem;line-height:3.42rem;color:#222;left:399.7rem;width:200rem;text-align:right;">0,00</span>
<span class="t s" style="top:315.17rem;font-size:2.85rem;line-height:3.42rem;color:#222;left:420.5rem;width:200rem;text-align:right;">3.666,30</span>
<div style="left:600.1rem;top:329.75rem;width:21.3rem;height:4.55rem;border:.5rem solid #217346"></div>
<div style="left:627.8rem;top:229.8rem;width:5.9rem;height:113.2rem;background:#f0f0f0;"></div>
<div style="left:627.7rem;top:229.8rem;width:0.3rem;height:113.2rem;background:#c8c8c8;"></div>
<div style="left:628.6rem;top:235rem;width:4.4rem;height:99rem;background:#fff;border:.25rem solid #cfcfcf"></div>
<div style="left:628.6rem;top:334rem;width:4.4rem;height:5.8rem;background:#cdcdcd;"></div>
<div style="left:628.6rem;top:339.9rem;width:4.4rem;height:3.1rem;background:#fff;border:.25rem solid #cfcfcf"></div>
<span class="t s" style="top:230.88rem;font-size:2.2rem;line-height:2.64rem;color:#6e6e6e;left:530.8rem;width:200rem;text-align:center;">▴</span>
<span class="t s" style="top:340.18rem;font-size:2.2rem;line-height:2.64rem;color:#6e6e6e;left:530.8rem;width:200rem;text-align:center;">▾</span>
<div style="left:476.6rem;top:343rem;width:157.1rem;height:5.8rem;background:#e6e6e6;"></div>
<div style="left:476.6rem;top:342.9rem;width:157.1rem;height:0.3rem;background:#c8c8c8;"></div>
<div style="left:503rem;top:344.4rem;width:108rem;height:3.2rem;background:#fff;border:.2rem solid #d0d0d0"></div>
<span class="t s" style="top:344.44rem;font-size:2.6rem;line-height:3.12rem;color:#888;left:394.4rem;width:200rem;text-align:center;">⋮</span>
<span class="t s" style="top:344.68rem;font-size:2.2rem;line-height:2.64rem;color:#666;left:400.4rem;width:200rem;text-align:center;">◂</span>
<div style="left:623.6rem;top:344.3rem;width:3.6rem;height:3.4rem;background:#fff;border-radius:1rem"></div>
<span class="t s" style="top:344.68rem;font-size:2.2rem;line-height:2.64rem;color:#6e6e6e;left:525.4rem;width:200rem;text-align:center;">▸</span>
<div style="left:611rem;top:344.4rem;width:12.2rem;height:3.2rem;background:#d2d2d2;"></div>
<div style="left:476.6rem;top:348.8rem;width:157.1rem;height:5.2rem;background:#f3f2f1;"></div>
<div style="left:561.4rem;top:349.6rem;width:8rem;height:4rem;background:#d2d2d2;"></div>
<div style="left:563.7rem;top:350.2rem;width:3.4rem;height:2.8rem;border:.35rem solid #666"></div>
<div style="left:572.9rem;top:350.2rem;width:3.4rem;height:2.8rem;border:.35rem solid #666"></div>
<div style="left:582.1rem;top:350.2rem;width:3.4rem;height:2.8rem;border:.35rem solid #666"></div>
<div style="left:590rem;top:351.55rem;width:2rem;height:0.3rem;background:#666;"></div>
<div style="left:594rem;top:351.6rem;width:22rem;height:0.2rem;background:#aaa;"></div>
<div style="left:603.6rem;top:350.2rem;width:0.9rem;height:3rem;background:#555;"></div>
<div style="left:617rem;top:351.55rem;width:2rem;height:0.3rem;background:#666;"></div>
<div style="left:617.85rem;top:350.7rem;width:0.3rem;height:2rem;background:#666;"></div>
<span class="t s" style="top:349.92rem;font-size:2.8rem;line-height:3.36rem;color:#6e6e6e;left:621.2rem;letter-spacing:-0.15rem;">100 %</span>
</div>
<div id="w1" style="left:0;top:0;width:650rem;height:433rem">
<div style="left:65.25rem;top:2rem;width:411.8rem;height:422.95rem;background:#e6e6e6;border-left:.45rem solid #6fa585;border-right:.45rem solid #6fa585;border-bottom:.35rem solid #6fa585"></div>
<div style="left:65.2rem;top:2rem;width:411.8rem;height:14rem;background:#217346;"></div>
<div style="left:65.2rem;top:15.2rem;width:411.8rem;height:0.8rem;background:#1a6a3e;"></div>
<div style="left:65.7rem;top:16rem;width:410.9rem;height:12.9rem;background:#f3f2f1;"></div>
<div style="left:65.7rem;top:28.3rem;width:410.9rem;height:1.2rem;background:#dcdad8;"></div>
<div style="left:65.7rem;top:29.4rem;width:410.9rem;height:18.5rem;background:#e6e6e6;"></div>
<svg style="left:73.6rem;top:6.4rem;width:7rem;height:6.6rem" viewBox="0 0 70 66"><path d="M5 5h60v56H5z" fill="none" stroke="#fff" stroke-width="9"/><rect x="14" y="5" width="42" height="20" fill="#fff"/><rect x="18" y="42" width="34" height="19" fill="#fff"/></svg>
<svg style="left:85rem;top:6rem;width:8rem;height:7rem" viewBox="0 0 80 70"><path d="M12 22h34a20 18 0 0 1 0 36h-14" fill="none" stroke="#7fb093" stroke-width="8"/><path d="M24 8l-14 14l14 14" fill="none" stroke="#7fb093" stroke-width="8"/></svg>
<span class="t" style="top:7.24rem;font-size:3.6rem;line-height:4.32rem;color:#6aa383;left:95rem;">▾</span>
<svg style="left:101.5rem;top:6rem;width:8rem;height:7rem" viewBox="0 0 80 70"><path d="M68 22h-34a20 18 0 0 0 0 36h14" fill="none" stroke="#6aa383" stroke-width="8"/><path d="M56 8l14 14l-14 14" fill="none" stroke="#6aa383" stroke-width="8"/></svg>
<span class="t" style="top:7.24rem;font-size:3.6rem;line-height:4.32rem;color:#6aa383;left:111.5rem;">▾</span>
<div style="left:119.4rem;top:7.6rem;width:2.8rem;height:0.7rem;background:#fff;"></div>
<span class="t" style="top:8.04rem;font-size:3.6rem;line-height:4.32rem;color:#fff;left:119.1rem;">▾</span>
<span class="t" style="top:6.25rem;font-size:4.75rem;line-height:5.7rem;color:#fff;left:152.2rem;letter-spacing:-0.11rem;">Mod303_2021-01-01__2021-12-31.xls.xls</span>
<span class="t" style="top:6.25rem;font-size:4.75rem;line-height:5.7rem;color:#fff;left:238.9rem;letter-spacing:0.03rem;">[Solo lectura]</span>
<span class="t" style="top:6.25rem;font-size:4.75rem;line-height:5.7rem;color:#fff;left:270rem;letter-spacing:0.14rem;">[Modo de compatibilidad]</span>
<span class="t" style="top:6.25rem;font-size:4.75rem;line-height:5.7rem;color:#fff;left:328.6rem;letter-spacing:0.02rem;">-</span>
<span class="t" style="top:6.25rem;font-size:4.75rem;line-height:5.7rem;color:#fff;left:332.8rem;letter-spacing:0.06rem;">Excel</span>
<div style="left:370.8rem;top:5.3rem;width:27.2rem;height:7.6rem;background:#fff;"></div>
<span class="t" style="top:6.32rem;font-size:4.8rem;line-height:5.76rem;color:#217346;left:375rem;letter-spacing:-0.05rem;">Inic. ses.</span>
<svg style="left:407.9rem;top:6.6rem;width:6.2rem;height:4.7rem" viewBox="0 0 64 54" preserveAspectRatio="none"><rect x="4" y="4" width="56" height="46" fill="none" stroke="#fff" stroke-width="7"/><path d="M4 18h56" stroke="#fff" stroke-width="7"/><path d="M32 26l-10 12h20z" fill="#fff"/></svg>
<div style="left:427.8rem;top:8.6rem;width:4.4rem;height:0.6rem;background:#fff;"></div>
<div style="left:446.2rem;top:6.7rem;width:4.8rem;height:4.6rem;border:.55rem solid #fff"></div>
<svg style="left:465rem;top:6.6rem;width:5rem;height:5rem" viewBox="0 0 50 50"><path d="M3 3l44 44M47 3l-44 44" stroke="#fff" stroke-width="7"/></svg>
<span class="t" style="top:19.74rem;font-size:5.1rem;line-height:6.12rem;color:#444;left:70.8rem;letter-spacing:0.03rem;">Archivo</span>
<span class="t" style="top:19.74rem;font-size:5.1rem;line-height:6.12rem;color:#444;left:100rem;letter-spacing:-0.32rem;">Inicio</span>
<span class="t" style="top:19.74rem;font-size:5.1rem;line-height:6.12rem;color:#444;left:124rem;letter-spacing:-0.06rem;">Insertar</span>
<span class="t" style="top:19.74rem;font-size:5.1rem;line-height:6.12rem;color:#444;left:154.8rem;letter-spacing:0.17rem;">Disposición de página</span>
<span class="t" style="top:19.74rem;font-size:5.1rem;line-height:6.12rem;color:#444;left:219.4rem;letter-spacing:0.11rem;">Fórmulas</span>
<span class="t" style="top:19.74rem;font-size:5.1rem;line-height:6.12rem;color:#444;left:252.6rem;letter-spacing:0.24rem;">Datos</span>
<span class="t" style="top:19.74rem;font-size:5.1rem;line-height:6.12rem;color:#444;left:278.2rem;letter-spacing:-0.01rem;">Revisar</span>
<span class="t" style="top:19.74rem;font-size:5.1rem;line-height:6.12rem;color:#444;left:306.4rem;letter-spacing:0.15rem;">Vista</span>
<span class="t" style="top:19.74rem;font-size:5.1rem;line-height:6.12rem;color:#444;left:329.4rem;letter-spacing:0.17rem;">Ayuda</span>
<span class="t" style="top:19.74rem;font-size:5.1rem;line-height:6.12rem;color:#444;left:357.1rem;letter-spacing:0.15rem;">Acrobat</span>
<span class="t" style="top:19.74rem;font-size:5.1rem;line-height:6.12rem;color:#444;left:403.1rem;letter-spacing:0.02rem;">¿Qué de</span>
<svg style="left:391.4rem;top:18.4rem;width:6rem;height:8rem" viewBox="0 0 60 80"><path d="M30 6a20 20 0 0 1 12 36v12h-24v-12a20 20 0 0 1 12-36z" fill="none" stroke="#555" stroke-width="5"/><path d="M20 62h20M22 70h16" stroke="#555" stroke-width="5"/></svg>
<div style="left:433.9rem;top:17.6rem;width:37.3rem;height:9.5rem;background:#fff;"></div>
<svg style="left:436rem;top:19.6rem;width:6rem;height:6rem" viewBox="0 0 60 60"><path d="M6 30v24h40v-24" fill="none" stroke="#217346" stroke-width="6"/><path d="M14 40c4-16 14-24 30-24M34 6l12 10l-12 10" fill="none" stroke="#217346" stroke-width="6"/></svg>
<span class="t" style="top:19.64rem;font-size:5.1rem;line-height:6.12rem;color:#217346;font-weight:bold;left:443.3rem;letter-spacing:-0.04rem;">Compartir</span>
<div style="left:68.1rem;top:33.4rem;width:40.1rem;height:9.7rem;background:#fff;"></div>
<span class="t" style="top:35.56rem;font-size:4.9rem;line-height:5.88rem;color:#333;left:70.4rem;">A1</span>
<span class="t" style="top:35.44rem;font-size:4.6rem;line-height:5.52rem;color:#444;left:102.9rem;">▾</span>
<div style="left:114.2rem;top:36.3rem;width:0.7rem;height:0.8rem;background:#b5b5b5;"></div>
<div style="left:114.2rem;top:38.2rem;width:0.7rem;height:0.8rem;background:#b5b5b5;"></div>
<div style="left:114.2rem;top:40.1rem;width:0.7rem;height:0.8rem;background:#b5b5b5;"></div>
<div style="left:121.4rem;top:33.4rem;width:44rem;height:9.7rem;background:#fff;"></div>
<svg style="left:126.5rem;top:36rem;width:4.6rem;height:4.6rem" viewBox="0 0 46 46"><path d="M4 4l38 38M42 4l-38 38" stroke="#b0b0b0" stroke-width="5"/></svg>
<svg style="left:140.8rem;top:36rem;width:6rem;height:4.8rem" viewBox="0 0 60 48"><path d="M4 26l16 16l34-38" fill="none" stroke="#b0b0b0" stroke-width="5"/></svg>
<span class="t" style="top:35.04rem;font-size:5.6rem;line-height:6.72rem;color:#444;left:155.8rem;font-style:italic;font-family:"Liberation Serif",serif;">f</span>
<span class="t" style="top:37.14rem;font-size:3.6rem;line-height:4.32rem;color:#444;left:157.8rem;font-style:italic;font-family:"Liberation Serif",serif;">x</span>
<div style="left:167.6rem;top:33.4rem;width:308.8rem;height:9.7rem;background:#fff;"></div>
<svg style="left:470rem;top:37.4rem;width:3.6rem;height:2.6rem" viewBox="0 0 36 26"><path d="M3 4l15 16l15-16" fill="none" stroke="#555" stroke-width="6"/></svg>
<div style="left:65.8rem;top:47.9rem;width:402.8rem;height:5.8rem;background:#e6e6e6;"></div>
<svg style="left:70rem;top:49.2rem;width:4rem;height:4rem" viewBox="0 0 40 40"><path d="M36 4v32h-32z" fill="#b4b4b4"/></svg>
<div style="left:74.9rem;top:47.9rem;width:223.9rem;height:5.8rem;background:#d2d2d2;"></div>
<div style="left:74.9rem;top:53rem;width:223.9rem;height:0.8rem;background:#217346;"></div>
<span class="t" style="top:47.76rem;font-size:4.9rem;line-height:5.88rem;color:#217346;left:86.85rem;width:200rem;text-align:center;">A</span>
<div style="left:298.6rem;top:48.6rem;width:0.4rem;height:5.1rem;background:#b8b8b8;"></div>
<span class="t" style="top:47.76rem;font-size:4.9rem;line-height:5.88rem;color:#444;left:204.2rem;width:200rem;text-align:center;">B</span>
<div style="left:309.4rem;top:48.6rem;width:0.4rem;height:5.1rem;background:#b8b8b8;"></div>
<span class="t" style="top:47.76rem;font-size:4.9rem;line-height:5.88rem;color:#444;left:231.7rem;width:200rem;text-align:center;">C</span>
<div style="left:353.6rem;top:48.6rem;width:0.4rem;height:5.1rem;background:#b8b8b8;"></div>
<span class="t" style="top:47.76rem;font-size:4.9rem;line-height:5.88rem;color:#444;left:259.2rem;width:200rem;text-align:center;">D</span>
<div style="left:364.4rem;top:48.6rem;width:0.4rem;height:5.1rem;background:#b8b8b8;"></div>
<span class="t" style="top:47.76rem;font-size:4.9rem;line-height:5.88rem;color:#444;left:287rem;width:200rem;text-align:center;">E</span>
<div style="left:409.2rem;top:48.6rem;width:0.4rem;height:5.1rem;background:#b8b8b8;"></div>
<span class="t" style="top:47.76rem;font-size:4.9rem;line-height:5.88rem;color:#444;left:314.8rem;width:200rem;text-align:center;">F</span>
<div style="left:420rem;top:48.6rem;width:0.4rem;height:5.1rem;background:#b8b8b8;"></div>
<span class="t" style="top:47.76rem;font-size:4.9rem;line-height:5.88rem;color:#444;left:342.4rem;width:200rem;text-align:center;">G</span>
<div style="left:464.4rem;top:48.6rem;width:0.4rem;height:5.1rem;background:#b8b8b8;"></div>
<div style="left:74.9rem;top:53.7rem;width:393.7rem;height:351.8rem;background:#fff;"></div>
<div style="left:65.8rem;top:53.7rem;width:9.1rem;height:351.8rem;background:#e6e6e6;"></div>
<div style="left:65.8rem;top:53.7rem;width:9.1rem;height:7.6rem;background:#d2d2d2;"></div>
<div style="left:74.3rem;top:53.7rem;width:0.7rem;height:7.6rem;background:#217346;"></div>
<div id="grid" style="left:0;top:0;width:468.6rem;height:405.5rem;overflow:hidden">
<div style="left:66.2rem;top:61.1rem;width:8.7rem;height:0.4rem;background:#c4c4c4;"></div>
<span class="t" style="top:54.65rem;font-size:5rem;line-height:6rem;color:#333;left:-29.6rem;width:200rem;text-align:center;-webkit-text-stroke:.08rem;">1</span>
<div style="left:66.2rem;top:68rem;width:8.7rem;height:0.4rem;background:#c4c4c4;"></div>
<span class="t" style="top:61.9rem;font-size:5rem;line-height:6rem;color:#333;left:-29.6rem;width:200rem;text-align:center;-webkit-text-stroke:.08rem;">2</span>
<div style="left:66.2rem;top:78.3rem;width:8.7rem;height:0.4rem;background:#c4c4c4;"></div>
<span class="t" style="top:72.15rem;font-size:5rem;line-height:6rem;color:#333;left:-29.6rem;width:200rem;text-align:center;-webkit-text-stroke:.08rem;">3</span>
<div style="left:66.2rem;top:89.3rem;width:8.7rem;height:0.4rem;background:#c4c4c4;"></div>
<span class="t" style="top:83.15rem;font-size:5rem;line-height:6rem;color:#333;left:-29.6rem;width:200rem;text-align:center;-webkit-text-stroke:.08rem;">4</span>
<div style="left:66.2rem;top:96.25rem;width:8.7rem;height:0.4rem;background:#c4c4c4;"></div>
<span class="t" style="top:90.12rem;font-size:5rem;line-height:6rem;color:#333;left:-29.6rem;width:200rem;text-align:center;-webkit-text-stroke:.08rem;">5</span>
<div style="left:66.2rem;top:103.15rem;width:8.7rem;height:0.4rem;background:#c4c4c4;"></div>
<span class="t" style="top:97.05rem;font-size:5rem;line-height:6rem;color:#333;left:-29.6rem;width:200rem;text-align:center;-webkit-text-stroke:.08rem;">6</span>
<div style="left:66.2rem;top:110.05rem;width:8.7rem;height:0.4rem;background:#c4c4c4;"></div>
<span class="t" style="top:103.95rem;font-size:5rem;line-height:6rem;color:#333;left:-29.6rem;width:200rem;text-align:center;-webkit-text-stroke:.08rem;">7</span>
<div style="left:66.2rem;top:120.65rem;width:8.7rem;height:0.4rem;background:#c4c4c4;"></div>
<span class="t" style="top:114.5rem;font-size:5rem;line-height:6rem;color:#333;left:-29.6rem;width:200rem;text-align:center;-webkit-text-stroke:.08rem;">8</span>
<div style="left:66.2rem;top:127.57rem;width:8.7rem;height:0.4rem;background:#c4c4c4;"></div>
<span class="t" style="top:121.46rem;font-size:5rem;line-height:6rem;color:#333;left:-29.6rem;width:200rem;text-align:center;-webkit-text-stroke:.08rem;">9</span>
<div style="left:66.2rem;top:134.49rem;width:8.7rem;height:0.4rem;background:#c4c4c4;"></div>
<span class="t" style="top:128.38rem;font-size:5rem;line-height:6rem;color:#333;left:-29.6rem;width:200rem;text-align:center;-webkit-text-stroke:.08rem;">10</span>
<div style="left:66.2rem;top:141.41rem;width:8.7rem;height:0.4rem;background:#c4c4c4;"></div>
<span class="t" style="top:135.3rem;font-size:5rem;line-height:6rem;color:#333;left:-29.6rem;width:200rem;text-align:center;-webkit-text-stroke:.08rem;">11</span>
<div style="left:66.2rem;top:148.33rem;width:8.7rem;height:0.4rem;background:#c4c4c4;"></div>
<span class="t" style="top:142.22rem;font-size:5rem;line-height:6rem;color:#333;left:-29.6rem;width:200rem;text-align:center;-webkit-text-stroke:.08rem;">12</span>
<div style="left:66.2rem;top:155.25rem;width:8.7rem;height:0.4rem;background:#c4c4c4;"></div>
<span class="t" style="top:149.14rem;font-size:5rem;line-height:6rem;color:#333;left:-29.6rem;width:200rem;text-align:center;-webkit-text-stroke:.08rem;">13</span>
<div style="left:66.2rem;top:162.17rem;width:8.7rem;height:0.4rem;background:#c4c4c4;"></div>
<span class="t" style="top:156.06rem;font-size:5rem;line-height:6rem;color:#333;left:-29.6rem;width:200rem;text-align:center;-webkit-text-stroke:.08rem;">14</span>
<div style="left:66.2rem;top:169.09rem;width:8.7rem;height:0.4rem;background:#c4c4c4;"></div>
<span class="t" style="top:162.98rem;font-size:5rem;line-height:6rem;color:#333;left:-29.6rem;width:200rem;text-align:center;-webkit-text-stroke:.08rem;">15</span>
<div style="left:66.2rem;top:176.01rem;width:8.7rem;height:0.4rem;background:#c4c4c4;"></div>
<span class="t" style="top:169.9rem;font-size:5rem;line-height:6rem;color:#333;left:-29.6rem;width:200rem;text-align:center;-webkit-text-stroke:.08rem;">16</span>
<div style="left:66.2rem;top:182.93rem;width:8.7rem;height:0.4rem;background:#c4c4c4;"></div>
<span class="t" style="top:176.82rem;font-size:5rem;line-height:6rem;color:#333;left:-29.6rem;width:200rem;text-align:center;-webkit-text-stroke:.08rem;">17</span>
<div style="left:66.2rem;top:189.85rem;width:8.7rem;height:0.4rem;background:#c4c4c4;"></div>
<span class="t" style="top:183.74rem;font-size:5rem;line-height:6rem;color:#333;left:-29.6rem;width:200rem;text-align:center;-webkit-text-stroke:.08rem;">18</span>
<div style="left:66.2rem;top:196.77rem;width:8.7rem;height:0.4rem;background:#c4c4c4;"></div>
<span class="t" style="top:190.66rem;font-size:5rem;line-height:6rem;color:#333;left:-29.6rem;width:200rem;text-align:center;-webkit-text-stroke:.08rem;">19</span>
<div style="left:66.2rem;top:203.69rem;width:8.7rem;height:0.4rem;background:#c4c4c4;"></div>
<span class="t" style="top:197.58rem;font-size:5rem;line-height:6rem;color:#333;left:-29.6rem;width:200rem;text-align:center;-webkit-text-stroke:.08rem;">20</span>
<div style="left:66.2rem;top:210.61rem;width:8.7rem;height:0.4rem;background:#c4c4c4;"></div>
<span class="t" style="top:204.5rem;font-size:5rem;line-height:6rem;color:#333;left:-29.6rem;width:200rem;text-align:center;-webkit-text-stroke:.08rem;">21</span>
<div style="left:66.2rem;top:217.53rem;width:8.7rem;height:0.4rem;background:#c4c4c4;"></div>
<span class="t" style="top:211.42rem;font-size:5rem;line-height:6rem;color:#333;left:-29.6rem;width:200rem;text-align:center;-webkit-text-stroke:.08rem;">22</span>
<div style="left:66.2rem;top:224.45rem;width:8.7rem;height:0.4rem;background:#c4c4c4;"></div>
<span class="t" style="top:218.34rem;font-size:5rem;line-height:6rem;color:#333;left:-29.6rem;width:200rem;text-align:center;-webkit-text-stroke:.08rem;">23</span>
<div style="left:66.2rem;top:231.37rem;width:8.7rem;height:0.4rem;background:#c4c4c4;"></div>
<span class="t" style="top:225.26rem;font-size:5rem;line-height:6rem;color:#333;left:-29.6rem;width:200rem;text-align:center;-webkit-text-stroke:.08rem;">24</span>
<div style="left:66.2rem;top:238.29rem;width:8.7rem;height:0.4rem;background:#c4c4c4;"></div>
<span class="t" style="top:232.18rem;font-size:5rem;line-height:6rem;color:#333;left:-29.6rem;width:200rem;text-align:center;-webkit-text-stroke:.08rem;">25</span>
<div style="left:66.2rem;top:245.21rem;width:8.7rem;height:0.4rem;background:#c4c4c4;"></div>
<span class="t" style="top:239.1rem;font-size:5rem;line-height:6rem;color:#333;left:-29.6rem;width:200rem;text-align:center;-webkit-text-stroke:.08rem;">26</span>
<div style="left:66.2rem;top:252.13rem;width:8.7rem;height:0.4rem;background:#c4c4c4;"></div>
<span class="t" style="top:246.02rem;font-size:5rem;line-height:6rem;color:#333;left:-29.6rem;width:200rem;text-align:center;-webkit-text-stroke:.08rem;">27</span>
<div style="left:66.2rem;top:259.05rem;width:8.7rem;height:0.4rem;background:#c4c4c4;"></div>
<span class="t" style="top:252.94rem;font-size:5rem;line-height:6rem;color:#333;left:-29.6rem;width:200rem;text-align:center;-webkit-text-stroke:.08rem;">28</span>
<div style="left:66.2rem;top:265.97rem;width:8.7rem;height:0.4rem;background:#c4c4c4;"></div>
<span class="t" style="top:259.86rem;font-size:5rem;line-height:6rem;color:#333;left:-29.6rem;width:200rem;text-align:center;-webkit-text-stroke:.08rem;">29</span>
<div style="left:66.2rem;top:272.89rem;width:8.7rem;height:0.4rem;background:#c4c4c4;"></div>
<span class="t" style="top:266.78rem;font-size:5rem;line-height:6rem;color:#333;left:-29.6rem;width:200rem;text-align:center;-webkit-text-stroke:.08rem;">30</span>
<div style="left:66.2rem;top:279.81rem;width:8.7rem;height:0.4rem;background:#c4c4c4;"></div>
<span class="t" style="top:273.7rem;font-size:5rem;line-height:6rem;color:#333;left:-29.6rem;width:200rem;text-align:center;-webkit-text-stroke:.08rem;">31</span>
<div style="left:66.2rem;top:286.73rem;width:8.7rem;height:0.4rem;background:#c4c4c4;"></div>
<span class="t" style="top:280.62rem;font-size:5rem;line-height:6rem;color:#333;left:-29.6rem;width:200rem;text-align:center;-webkit-text-stroke:.08rem;">32</span>
<div style="left:66.2rem;top:293.65rem;width:8.7rem;height:0.4rem;background:#c4c4c4;"></div>
<span class="t" style="top:287.54rem;font-size:5rem;line-height:6rem;color:#333;left:-29.6rem;width:200rem;text-align:center;-webkit-text-stroke:.08rem;">33</span>
<div style="left:66.2rem;top:300.57rem;width:8.7rem;height:0.4rem;background:#c4c4c4;"></div>
<span class="t" style="top:294.46rem;font-size:5rem;line-height:6rem;color:#333;left:-29.6rem;width:200rem;text-align:center;-webkit-text-stroke:.08rem;">34</span>
<div style="left:66.2rem;top:307.49rem;width:8.7rem;height:0.4rem;background:#c4c4c4;"></div>
<span class="t" style="top:301.38rem;font-size:5rem;line-height:6rem;color:#333;left:-29.6rem;width:200rem;text-align:center;-webkit-text-stroke:.08rem;">35</span>
<div style="left:66.2rem;top:314.41rem;width:8.7rem;height:0.4rem;background:#c4c4c4;"></div>
<span class="t" style="top:308.3rem;font-size:5rem;line-height:6rem;color:#333;left:-29.6rem;width:200rem;text-align:center;-webkit-text-stroke:.08rem;">36</span>
<div style="left:66.2rem;top:321.33rem;width:8.7rem;height:0.4rem;background:#c4c4c4;"></div>
<span class="t" style="top:315.22rem;font-size:5rem;line-height:6rem;color:#333;left:-29.6rem;width:200rem;text-align:center;-webkit-text-stroke:.08rem;">37</span>
<div style="left:66.2rem;top:328.25rem;width:8.7rem;height:0.4rem;background:#c4c4c4;"></div>
<span class="t" style="top:322.14rem;font-size:5rem;line-height:6rem;color:#333;left:-29.6rem;width:200rem;text-align:center;-webkit-text-stroke:.08rem;">38</span>
<div style="left:66.2rem;top:335.17rem;width:8.7rem;height:0.4rem;background:#c4c4c4;"></div>
<span class="t" style="top:329.06rem;font-size:5rem;line-height:6rem;color:#333;left:-29.6rem;width:200rem;text-align:center;-webkit-text-stroke:.08rem;">39</span>
<div style="left:66.2rem;top:342.09rem;width:8.7rem;height:0.4rem;background:#c4c4c4;"></div>
<span class="t" style="top:335.98rem;font-size:5rem;line-height:6rem;color:#333;left:-29.6rem;width:200rem;text-align:center;-webkit-text-stroke:.08rem;">40</span>
<div style="left:66.2rem;top:352.69rem;width:8.7rem;height:0.4rem;background:#c4c4c4;"></div>
<span class="t" style="top:346.54rem;font-size:5rem;line-height:6rem;color:#333;left:-29.6rem;width:200rem;text-align:center;-webkit-text-stroke:.08rem;">41</span>
<div style="left:66.2rem;top:359.61rem;width:8.7rem;height:0.4rem;background:#c4c4c4;"></div>
<span class="t" style="top:353.5rem;font-size:5rem;line-height:6rem;color:#333;left:-29.6rem;width:200rem;text-align:center;-webkit-text-stroke:.08rem;">42</span>
<div style="left:66.2rem;top:366.53rem;width:8.7rem;height:0.4rem;background:#c4c4c4;"></div>
<span class="t" style="top:360.42rem;font-size:5rem;line-height:6rem;color:#333;left:-29.6rem;width:200rem;text-align:center;-webkit-text-stroke:.08rem;">43</span>
<div style="left:66.2rem;top:373.45rem;width:8.7rem;height:0.4rem;background:#c4c4c4;"></div>
<span class="t" style="top:367.34rem;font-size:5rem;line-height:6rem;color:#333;left:-29.6rem;width:200rem;text-align:center;-webkit-text-stroke:.08rem;">44</span>
<div style="left:66.2rem;top:380.37rem;width:8.7rem;height:0.4rem;background:#c4c4c4;"></div>
<span class="t" style="top:374.26rem;font-size:5rem;line-height:6rem;color:#333;left:-29.6rem;width:200rem;text-align:center;-webkit-text-stroke:.08rem;">45</span>
<div style="left:66.2rem;top:387.29rem;width:8.7rem;height:0.4rem;background:#c4c4c4;"></div>
<span class="t" style="top:381.18rem;font-size:5rem;line-height:6rem;color:#333;left:-29.6rem;width:200rem;text-align:center;-webkit-text-stroke:.08rem;">46</span>
<div style="left:66.2rem;top:394.21rem;width:8.7rem;height:0.4rem;background:#c4c4c4;"></div>
<span class="t" style="top:388.1rem;font-size:5rem;line-height:6rem;color:#333;left:-29.6rem;width:200rem;text-align:center;-webkit-text-stroke:.08rem;">47</span>
<div style="left:66.2rem;top:401.13rem;width:8.7rem;height:0.4rem;background:#c4c4c4;"></div>
<span class="t" style="top:395.02rem;font-size:5rem;line-height:6rem;color:#333;left:-29.6rem;width:200rem;text-align:center;-webkit-text-stroke:.08rem;">48</span>
<div style="left:66.2rem;top:408.05rem;width:8.7rem;height:0.4rem;background:#c4c4c4;"></div>
<span class="t" style="top:401.94rem;font-size:5rem;line-height:6rem;color:#333;left:-29.6rem;width:200rem;text-align:center;-webkit-text-stroke:.08rem;">49</span>
<div style="left:66.2rem;top:414.97rem;width:8.7rem;height:0.4rem;background:#c4c4c4;"></div>
<span class="t" style="top:408.86rem;font-size:5rem;line-height:6rem;color:#333;left:-29.6rem;width:200rem;text-align:center;-webkit-text-stroke:.08rem;">50</span>
<div style="left:74.7rem;top:53.7rem;width:0.4rem;height:351.8rem;background:#bdbdbd;"></div>
<div style="left:74.9rem;top:68.2rem;width:389.7rem;height:10.3rem;background:#7fabdb;"></div>
<div style="left:74.9rem;top:78.5rem;width:389.7rem;height:11rem;background:#deebf5;"></div>
<div style="left:74.9rem;top:110.25rem;width:389.7rem;height:10.6rem;background:#deebf5;"></div>
<div style="left:74.9rem;top:342.29rem;width:389.7rem;height:10.6rem;background:#deebf5;"></div>
<span class="t" style="top:71.82rem;font-size:5.3rem;line-height:6.36rem;color:#fff;left:76.8rem;">Modelo 303</span>
<span class="t" style="top:81.02rem;font-size:5.3rem;line-height:6.36rem;color:#1515f0;font-weight:bold;left:169.75rem;width:200rem;text-align:center;">Identificación</span>
<span class="t" style="top:112.57rem;font-size:5.3rem;line-height:6.36rem;color:#1515f0;font-weight:bold;left:169.75rem;width:200rem;text-align:center;">Régimen General</span>
<span class="t" style="top:344.61rem;font-size:5.3rem;line-height:6.36rem;color:#1515f0;font-weight:bold;left:169.75rem;width:200rem;text-align:center;">Información Adicional</span>
<span class="t" style="top:90rem;font-size:5.3rem;line-height:6.36rem;color:#000;font-weight:bold;left:76.8rem;">NIF: 51428245S</span>
<span class="t" style="top:96.92rem;font-size:5.3rem;line-height:6.36rem;color:#000;font-weight:bold;left:76.8rem;">Apellidos y nombre: PEDRO ROMERO TERREN</span>
<span class="t" style="top:103.82rem;font-size:5.3rem;line-height:6.36rem;color:#000;font-weight:bold;left:76.8rem;">Periodo: 01/01/2021 - 31/12/2021</span>
<div class="cell" style="left:76.7rem;top:120.85rem;width:218.9rem;height:7.22rem;font-size:5.3rem;line-height:7.42rem;font-weight:bold;">IVA Devengado</div>
<span class="t" style="top:121.13rem;font-size:5.3rem;line-height:6.36rem;color:#000;left:299.3rem;">Base Imponible</span>
<span class="t" style="top:121.13rem;font-size:5.3rem;line-height:6.36rem;color:#000;left:354.3rem;">Tipo %</span>
<span class="t" style="top:121.13rem;font-size:5.3rem;line-height:6.36rem;color:#000;left:409.9rem;">Cuota</span>
<div style="left:298.7rem;top:127.67rem;width:11.2rem;height:7.12rem;background:#7ba7dc;border:.55rem solid #0c1c33"></div>
<svg style="left:299.1rem;top:128.07rem;width:2.6rem;height:2.6rem" viewBox="0 0 10 10"><path d="M0 0h10l-10 10z" fill="#1e7b3c"/></svg>
<span class="t" style="top:128.3rem;font-size:5.3rem;line-height:6.36rem;color:#000;font-weight:bold;left:204.5rem;width:200rem;text-align:center;">01</span>
<div style="left:309.9rem;top:127.77rem;width:43.9rem;height:7.02rem;background:#fffde6;border:.3rem solid #c9c9c0"></div>
<span class="t" style="top:128.3rem;font-size:5.3rem;line-height:6.36rem;color:#9a9a9a;left:152.8rem;width:200rem;text-align:right;">206.397,31</span>
<div style="left:353.7rem;top:127.67rem;width:11.2rem;height:7.12rem;background:#7ba7dc;border:.55rem solid #0c1c33"></div>
<svg style="left:354.1rem;top:128.07rem;width:2.6rem;height:2.6rem" viewBox="0 0 10 10"><path d="M0 0h10l-10 10z" fill="#1e7b3c"/></svg>
<span class="t" style="top:128.3rem;font-size:5.3rem;line-height:6.36rem;color:#000;font-weight:bold;left:259.5rem;width:200rem;text-align:center;">02</span>
<div style="left:364.9rem;top:127.77rem;width:44.5rem;height:7.02rem;background:#fffde6;border:.3rem solid #c9c9c0"></div>
<span class="t" style="top:128.3rem;font-size:5.3rem;line-height:6.36rem;color:#9a9a9a;left:208.4rem;width:200rem;text-align:right;">21,00</span>
<div style="left:409.3rem;top:127.67rem;width:11.2rem;height:7.12rem;background:#7ba7dc;border:.55rem solid #0c1c33"></div>
<svg style="left:409.7rem;top:128.07rem;width:2.6rem;height:2.6rem" viewBox="0 0 10 10"><path d="M0 0h10l-10 10z" fill="#1e7b3c"/></svg>
<span class="t" style="top:128.3rem;font-size:5.3rem;line-height:6.36rem;color:#000;font-weight:bold;left:315.1rem;width:200rem;text-align:center;">03</span>
<div style="left:420.5rem;top:127.77rem;width:44.1rem;height:7.02rem;background:#fffde6;border:.3rem solid #c9c9c0"></div>
<span class="t" style="top:128.3rem;font-size:5.3rem;line-height:6.36rem;color:#9a9a9a;left:263.6rem;width:200rem;text-align:right;">43.343,47</span>
<div class="cell" style="left:76.7rem;top:134.69rem;width:218.9rem;height:7.22rem;font-size:5.3rem;line-height:7.42rem;">Régimen General<span style="position:static;color:#9a9a9a">............................................................................................................................................................................................................................</span></div>
<div style="left:298.7rem;top:134.59rem;width:11.2rem;height:7.12rem;background:#7ba7dc;border:.55rem solid #0c1c33"></div>
<svg style="left:299.1rem;top:134.99rem;width:2.6rem;height:2.6rem" viewBox="0 0 10 10"><path d="M0 0h10l-10 10z" fill="#1e7b3c"/></svg>
<span class="t" style="top:135.22rem;font-size:5.3rem;line-height:6.36rem;color:#000;font-weight:bold;left:204.5rem;width:200rem;text-align:center;">04</span>
<div style="left:309.9rem;top:134.69rem;width:43.9rem;height:7.02rem;background:#fffde6;border:.3rem solid #c9c9c0"></div>
<span class="t" style="top:135.22rem;font-size:5.3rem;line-height:6.36rem;color:#9a9a9a;left:152.8rem;width:200rem;text-align:right;">2.477,28</span>
<div style="left:353.7rem;top:134.59rem;width:11.2rem;height:7.12rem;background:#7ba7dc;border:.55rem solid #0c1c33"></div>
<svg style="left:354.1rem;top:134.99rem;width:2.6rem;height:2.6rem" viewBox="0 0 10 10"><path d="M0 0h10l-10 10z" fill="#1e7b3c"/></svg>
<span class="t" style="top:135.22rem;font-size:5.3rem;line-height:6.36rem;color:#000;font-weight:bold;left:259.5rem;width:200rem;text-align:center;">05</span>
<div style="left:364.9rem;top:134.69rem;width:44.5rem;height:7.02rem;background:#fffde6;border:.3rem solid #c9c9c0"></div>
<span class="t" style="top:135.22rem;font-size:5.3rem;line-height:6.36rem;color:#9a9a9a;left:208.4rem;width:200rem;text-align:right;">10,00</span>
<div style="left:409.3rem;top:134.59rem;width:11.2rem;height:7.12rem;background:#7ba7dc;border:.55rem solid #0c1c33"></div>
<svg style="left:409.7rem;top:134.99rem;width:2.6rem;height:2.6rem" viewBox="0 0 10 10"><path d="M0 0h10l-10 10z" fill="#1e7b3c"/></svg>
<span class="t" style="top:135.22rem;font-size:5.3rem;line-height:6.36rem;color:#000;font-weight:bold;left:315.1rem;width:200rem;text-align:center;">06</span>
<div style="left:420.5rem;top:134.69rem;width:44.1rem;height:7.02rem;background:#fffde6;border:.3rem solid #c9c9c0"></div>
<span class="t" style="top:135.22rem;font-size:5.3rem;line-height:6.36rem;color:#9a9a9a;left:263.6rem;width:200rem;text-align:right;">247,72</span>
<div style="left:298.7rem;top:141.51rem;width:11.2rem;height:7.12rem;background:#7ba7dc;border:.55rem solid #0c1c33"></div>
<svg style="left:299.1rem;top:141.91rem;width:2.6rem;height:2.6rem" viewBox="0 0 10 10"><path d="M0 0h10l-10 10z" fill="#1e7b3c"/></svg>
<span class="t" style="top:142.14rem;font-size:5.3rem;line-height:6.36rem;color:#000;font-weight:bold;left:204.5rem;width:200rem;text-align:center;">07</span>
<div style="left:309.9rem;top:141.61rem;width:43.9rem;height:7.02rem;background:#fffde6;border:.3rem solid #c9c9c0"></div>
<span class="t" style="top:142.14rem;font-size:5.3rem;line-height:6.36rem;color:#9a9a9a;left:152.8rem;width:200rem;text-align:right;">0,00</span>
<div style="left:353.7rem;top:141.51rem;width:11.2rem;height:7.12rem;background:#7ba7dc;border:.55rem solid #0c1c33"></div>
<svg style="left:354.1rem;top:141.91rem;width:2.6rem;height:2.6rem" viewBox="0 0 10 10"><path d="M0 0h10l-10 10z" fill="#1e7b3c"/></svg>
<span class="t" style="top:142.14rem;font-size:5.3rem;line-height:6.36rem;color:#000;font-weight:bold;left:259.5rem;width:200rem;text-align:center;">08</span>
<div style="left:364.9rem;top:141.61rem;width:44.5rem;height:7.02rem;background:#fffde6;border:.3rem solid #c9c9c0"></div>
<span class="t" style="top:142.14rem;font-size:5.3rem;line-height:6.36rem;color:#9a9a9a;left:208.4rem;width:200rem;text-align:right;">0,00</span>
<div style="left:409.3rem;top:141.51rem;width:11.2rem;height:7.12rem;background:#7ba7dc;border:.55rem solid #0c1c33"></div>
<svg style="left:409.7rem;top:141.91rem;width:2.6rem;height:2.6rem" viewBox="0 0 10 10"><path d="M0 0h10l-10 10z" fill="#1e7b3c"/></svg>
<span class="t" style="top:142.14rem;font-size:5.3rem;line-height:6.36rem;color:#000;font-weight:bold;left:315.1rem;width:200rem;text-align:center;">09</span>
<div style="left:420.5rem;top:141.61rem;width:44.1rem;height:7.02rem;background:#fffde6;border:.3rem solid #c9c9c0"></div>
<span class="t" style="top:142.14rem;font-size:5.3rem;line-height:6.36rem;color:#9a9a9a;left:263.6rem;width:200rem;text-align:right;">0,00</span>
<div class="cell" style="left:76.7rem;top:155.45rem;width:218.9rem;height:7.22rem;font-size:5.3rem;line-height:7.42rem;">Adquisiciones Intracomunitarias de Bienes y Servicios<span style="position:static;color:#9a9a9a">............................................................................................................................................................................................................................</span></div>
<div style="left:298.7rem;top:155.35rem;width:11.2rem;height:7.12rem;background:#7ba7dc;border:.55rem solid #0c1c33"></div>
<svg style="left:299.1rem;top:155.75rem;width:2.6rem;height:2.6rem" viewBox="0 0 10 10"><path d="M0 0h10l-10 10z" fill="#1e7b3c"/></svg>
<span class="t" style="top:155.98rem;font-size:5.3rem;line-height:6.36rem;color:#000;font-weight:bold;left:204.5rem;width:200rem;text-align:center;">10</span>
<div style="left:309.9rem;top:155.45rem;width:43.9rem;height:7.02rem;background:#fffde6;border:.3rem solid #c9c9c0"></div>
<span class="t" style="top:155.98rem;font-size:5.3rem;line-height:6.36rem;color:#9a9a9a;left:152.8rem;width:200rem;text-align:right;">174.313,00</span>
<div style="left:409.3rem;top:155.35rem;width:11.2rem;height:7.12rem;background:#7ba7dc;border:.55rem solid #0c1c33"></div>
<svg style="left:409.7rem;top:155.75rem;width:2.6rem;height:2.6rem" viewBox="0 0 10 10"><path d="M0 0h10l-10 10z" fill="#1e7b3c"/></svg>
<span class="t" style="top:155.98rem;font-size:5.3rem;line-height:6.36rem;color:#000;font-weight:bold;left:315.1rem;width:200rem;text-align:center;">11</span>
<div style="left:420.5rem;top:155.45rem;width:44.1rem;height:7.02rem;background:#fffde6;border:.3rem solid #c9c9c0"></div>
<span class="t" style="top:155.98rem;font-size:5.3rem;line-height:6.36rem;color:#9a9a9a;left:263.6rem;width:200rem;text-align:right;">36.605,73</span>
<div class="cell" style="left:76.7rem;top:162.37rem;width:218.9rem;height:7.22rem;font-size:5.3rem;line-height:7.42rem;">Otras operaciones con inversión del sujeto pasivo (excepto. adq. intracom)<span style="position:static;color:#9a9a9a">............................................................................................................................................................................................................................</span></div>
<div style="left:298.7rem;top:162.27rem;width:11.2rem;height:7.12rem;background:#7ba7dc;border:.55rem solid #0c1c33"></div>
<svg style="left:299.1rem;top:162.67rem;width:2.6rem;height:2.6rem" viewBox="0 0 10 10"><path d="M0 0h10l-10 10z" fill="#1e7b3c"/></svg>
<span class="t" style="top:162.9rem;font-size:5.3rem;line-height:6.36rem;color:#000;font-weight:bold;left:204.5rem;width:200rem;text-align:center;">12</span>
<div style="left:309.9rem;top:162.37rem;width:43.9rem;height:7.02rem;background:#fffde6;border:.3rem solid #c9c9c0"></div>
<span class="t" style="top:162.9rem;font-size:5.3rem;line-height:6.36rem;color:#9a9a9a;left:152.8rem;width:200rem;text-align:right;">16.204,60</span>
<div style="left:409.3rem;top:162.27rem;width:11.2rem;height:7.12rem;background:#7ba7dc;border:.55rem solid #0c1c33"></div>
<svg style="left:409.7rem;top:162.67rem;width:2.6rem;height:2.6rem" viewBox="0 0 10 10"><path d="M0 0h10l-10 10z" fill="#1e7b3c"/></svg>
<span class="t" style="top:162.9rem;font-size:5.3rem;line-height:6.36rem;color:#000;font-weight:bold;left:315.1rem;width:200rem;text-align:center;">13</span>
<div style="left:420.5rem;top:162.37rem;width:44.1rem;height:7.02rem;background:#fffde6;border:.3rem solid #c9c9c0"></div>
<span class="t" style="top:162.9rem;font-size:5.3rem;line-height:6.36rem;color:#9a9a9a;left:263.6rem;width:200rem;text-align:right;">3.402,97</span>
<div class="cell" style="left:76.7rem;top:169.29rem;width:218.9rem;height:7.22rem;font-size:5.3rem;line-height:7.42rem;">Modificación bases y cuotas<span style="position:static;color:#9a9a9a">............................................................................................................................................................................................................................</span></div>
<div style="left:298.7rem;top:169.19rem;width:11.2rem;height:7.12rem;background:#7ba7dc;border:.55rem solid #0c1c33"></div>
<svg style="left:299.1rem;top:169.59rem;width:2.6rem;height:2.6rem" viewBox="0 0 10 10"><path d="M0 0h10l-10 10z" fill="#1e7b3c"/></svg>
<span class="t" style="top:169.82rem;font-size:5.3rem;line-height:6.36rem;color:#000;font-weight:bold;left:204.5rem;width:200rem;text-align:center;">14</span>
<div style="left:309.9rem;top:169.29rem;width:43.9rem;height:7.02rem;background:#fffde6;border:.3rem solid #c9c9c0"></div>
<span class="t" style="top:169.82rem;font-size:5.3rem;line-height:6.36rem;color:#9a9a9a;left:152.8rem;width:200rem;text-align:right;">0,00</span>
<div style="left:409.3rem;top:169.19rem;width:11.2rem;height:7.12rem;background:#7ba7dc;border:.55rem solid #0c1c33"></div>
<svg style="left:409.7rem;top:169.59rem;width:2.6rem;height:2.6rem" viewBox="0 0 10 10"><path d="M0 0h10l-10 10z" fill="#1e7b3c"/></svg>
<span class="t" style="top:169.82rem;font-size:5.3rem;line-height:6.36rem;color:#000;font-weight:bold;left:315.1rem;width:200rem;text-align:center;">15</span>
<div style="left:420.5rem;top:169.29rem;width:44.1rem;height:7.02rem;background:#fffde6;border:.3rem solid #c9c9c0"></div>
<span class="t" style="top:169.82rem;font-size:5.3rem;line-height:6.36rem;color:#9a9a9a;left:263.6rem;width:200rem;text-align:right;">0,00</span>
<div style="left:298.7rem;top:183.03rem;width:11.2rem;height:7.12rem;background:#7ba7dc;border:.55rem solid #0c1c33"></div>
<svg style="left:299.1rem;top:183.43rem;width:2.6rem;height:2.6rem" viewBox="0 0 10 10"><path d="M0 0h10l-10 10z" fill="#1e7b3c"/></svg>
<span class="t" style="top:183.66rem;font-size:5.3rem;line-height:6.36rem;color:#000;font-weight:bold;left:204.5rem;width:200rem;text-align:center;">16</span>
<div style="left:309.9rem;top:183.13rem;width:43.9rem;height:7.02rem;background:#fffde6;border:.3rem solid #c9c9c0"></div>
<span class="t" style="top:183.66rem;font-size:5.3rem;line-height:6.36rem;color:#9a9a9a;left:152.8rem;width:200rem;text-align:right;">41.533,07</span>
<div style="left:353.7rem;top:183.03rem;width:11.2rem;height:7.12rem;background:#7ba7dc;border:.55rem solid #0c1c33"></div>
<svg style="left:354.1rem;top:183.43rem;width:2.6rem;height:2.6rem" viewBox="0 0 10 10"><path d="M0 0h10l-10 10z" fill="#1e7b3c"/></svg>
<span class="t" style="top:183.66rem;font-size:5.3rem;line-height:6.36rem;color:#000;font-weight:bold;left:259.5rem;width:200rem;text-align:center;">17</span>
<div style="left:364.9rem;top:183.13rem;width:44.5rem;height:7.02rem;background:#fffde6;border:.3rem solid #c9c9c0"></div>
<span class="t" style="top:183.66rem;font-size:5.3rem;line-height:6.36rem;color:#9a9a9a;left:208.4rem;width:200rem;text-align:right;">5,20</span>
<div style="left:409.3rem;top:183.03rem;width:11.2rem;height:7.12rem;background:#7ba7dc;border:.55rem solid #0c1c33"></div>
<svg style="left:409.7rem;top:183.43rem;width:2.6rem;height:2.6rem" viewBox="0 0 10 10"><path d="M0 0h10l-10 10z" fill="#1e7b3c"/></svg>
<span class="t" style="top:183.66rem;font-size:5.3rem;line-height:6.36rem;color:#000;font-weight:bold;left:315.1rem;width:200rem;text-align:center;">18</span>
<div style="left:420.5rem;top:183.13rem;width:44.1rem;height:7.02rem;background:#fffde6;border:.3rem solid #c9c9c0"></div>
<span class="t" style="top:183.66rem;font-size:5.3rem;line-height:6.36rem;color:#9a9a9a;left:263.6rem;width:200rem;text-align:right;">2.159,71</span>
<div class="cell" style="left:76.7rem;top:190.05rem;width:218.9rem;height:7.22rem;font-size:5.3rem;line-height:7.42rem;">Recargo equivalencia<span style="position:static;color:#9a9a9a">............................................................................................................................................................................................................................</span></div>
<div style="left:298.7rem;top:189.95rem;width:11.2rem;height:7.12rem;background:#7ba7dc;border:.55rem solid #0c1c33"></div>
<svg style="left:299.1rem;top:190.35rem;width:2.6rem;height:2.6rem" viewBox="0 0 10 10"><path d="M0 0h10l-10 10z" fill="#1e7b3c"/></svg>
<span class="t" style="top:190.58rem;font-size:5.3rem;line-height:6.36rem;color:#000;font-weight:bold;left:204.5rem;width:200rem;text-align:center;">19</span>
<div style="left:309.9rem;top:190.05rem;width:43.9rem;height:7.02rem;background:#fffde6;border:.3rem solid #c9c9c0"></div>
<span class="t" style="top:190.58rem;font-size:5.3rem;line-height:6.36rem;color:#9a9a9a;left:152.8rem;width:200rem;text-align:right;">0,00</span>
<div style="left:353.7rem;top:189.95rem;width:11.2rem;height:7.12rem;background:#7ba7dc;border:.55rem solid #0c1c33"></div>
<svg style="left:354.1rem;top:190.35rem;width:2.6rem;height:2.6rem" viewBox="0 0 10 10"><path d="M0 0h10l-10 10z" fill="#1e7b3c"/></svg>
<span class="t" style="top:190.58rem;font-size:5.3rem;line-height:6.36rem;color:#000;font-weight:bold;left:259.5rem;width:200rem;text-align:center;">20</span>
<div style="left:364.9rem;top:190.05rem;width:44.5rem;height:7.02rem;background:#fffde6;border:.3rem solid #c9c9c0"></div>
<span class="t" style="top:190.58rem;font-size:5.3rem;line-height:6.36rem;color:#9a9a9a;left:208.4rem;width:200rem;text-align:right;">0,00</span>
<div style="left:409.3rem;top:189.95rem;width:11.2rem;height:7.12rem;background:#7ba7dc;border:.55rem solid #0c1c33"></div>
<svg style="left:409.7rem;top:190.35rem;width:2.6rem;height:2.6rem" viewBox="0 0 10 10"><path d="M0 0h10l-10 10z" fill="#1e7b3c"/></svg>
<span class="t" style="top:190.58rem;font-size:5.3rem;line-height:6.36rem;color:#000;font-weight:bold;left:315.1rem;width:200rem;text-align:center;">21</span>
<div style="left:420.5rem;top:190.05rem;width:44.1rem;height:7.02rem;background:#fffde6;border:.3rem solid #c9c9c0"></div>
<span class="t" style="top:190.58rem;font-size:5.3rem;line-height:6.36rem;color:#9a9a9a;left:263.6rem;width:200rem;text-align:right;">0,00</span>
<div style="left:298.7rem;top:196.87rem;width:11.2rem;height:7.12rem;background:#7ba7dc;border:.55rem solid #0c1c33"></div>
<svg style="left:299.1rem;top:197.27rem;width:2.6rem;height:2.6rem" viewBox="0 0 10 10"><path d="M0 0h10l-10 10z" fill="#1e7b3c"/></svg>
<span class="t" style="top:197.5rem;font-size:5.3rem;line-height:6.36rem;color:#000;font-weight:bold;left:204.5rem;width:200rem;text-align:center;">22</span>
<div style="left:309.9rem;top:196.97rem;width:43.9rem;height:7.02rem;background:#fffde6;border:.3rem solid #c9c9c0"></div>
<span class="t" style="top:197.5rem;font-size:5.3rem;line-height:6.36rem;color:#9a9a9a;left:152.8rem;width:200rem;text-align:right;">0,00</span>
<div style="left:353.7rem;top:196.87rem;width:11.2rem;height:7.12rem;background:#7ba7dc;border:.55rem solid #0c1c33"></div>
<svg style="left:354.1rem;top:197.27rem;width:2.6rem;height:2.6rem" viewBox="0 0 10 10"><path d="M0 0h10l-10 10z" fill="#1e7b3c"/></svg>
<span class="t" style="top:197.5rem;font-size:5.3rem;line-height:6.36rem;color:#000;font-weight:bold;left:259.5rem;width:200rem;text-align:center;">23</span>
<div style="left:364.9rem;top:196.97rem;width:44.5rem;height:7.02rem;background:#fffde6;border:.3rem solid #c9c9c0"></div>
<span class="t" style="top:197.5rem;font-size:5.3rem;line-height:6.36rem;color:#9a9a9a;left:208.4rem;width:200rem;text-align:right;">0,00</span>
<div style="left:409.3rem;top:196.87rem;width:11.2rem;height:7.12rem;background:#7ba7dc;border:.55rem solid #0c1c33"></div>
<svg style="left:409.7rem;top:197.27rem;width:2.6rem;height:2.6rem" viewBox="0 0 10 10"><path d="M0 0h10l-10 10z" fill="#1e7b3c"/></svg>
<span class="t" style="top:197.5rem;font-size:5.3rem;line-height:6.36rem;color:#000;font-weight:bold;left:315.1rem;width:200rem;text-align:center;">24</span>
<div style="left:420.5rem;top:196.97rem;width:44.1rem;height:7.02rem;background:#fffde6;border:.3rem solid #c9c9c0"></div>
<span class="t" style="top:197.5rem;font-size:5.3rem;line-height:6.36rem;color:#9a9a9a;left:263.6rem;width:200rem;text-align:right;">0,00</span>
<div class="cell" style="left:76.7rem;top:210.81rem;width:218.9rem;height:7.22rem;font-size:5.3rem;line-height:7.42rem;">Modificaciones bases y cuotas del recargo de equivalencia<span style="position:static;color:#9a9a9a">............................................................................................................................................................................................................................</span></div>
<div style="left:298.7rem;top:210.71rem;width:11.2rem;height:7.12rem;background:#7ba7dc;border:.55rem solid #0c1c33"></div>
<svg style="left:299.1rem;top:211.11rem;width:2.6rem;height:2.6rem" viewBox="0 0 10 10"><path d="M0 0h10l-10 10z" fill="#1e7b3c"/></svg>
<span class="t" style="top:211.34rem;font-size:5.3rem;line-height:6.36rem;color:#000;font-weight:bold;left:204.5rem;width:200rem;text-align:center;">25</span>
<div style="left:309.9rem;top:210.81rem;width:43.9rem;height:7.02rem;background:#fffde6;border:.3rem solid #c9c9c0"></div>
<span class="t" style="top:211.34rem;font-size:5.3rem;line-height:6.36rem;color:#9a9a9a;left:152.8rem;width:200rem;text-align:right;">0,00</span>
<div style="left:409.3rem;top:210.71rem;width:11.2rem;height:7.12rem;background:#7ba7dc;border:.55rem solid #0c1c33"></div>
<svg style="left:409.7rem;top:211.11rem;width:2.6rem;height:2.6rem" viewBox="0 0 10 10"><path d="M0 0h10l-10 10z" fill="#1e7b3c"/></svg>
<span class="t" style="top:211.34rem;font-size:5.3rem;line-height:6.36rem;color:#000;font-weight:bold;left:315.1rem;width:200rem;text-align:center;">26</span>
<div style="left:420.5rem;top:210.81rem;width:44.1rem;height:7.02rem;background:#fffde6;border:.3rem solid #c9c9c0"></div>
<span class="t" style="top:211.34rem;font-size:5.3rem;line-height:6.36rem;color:#9a9a9a;left:263.6rem;width:200rem;text-align:right;">0,00</span>
<div class="cell" style="left:76.7rem;top:224.65rem;width:218.9rem;height:7.22rem;font-size:5.3rem;line-height:7.42rem;"><span style="position:static;letter-spacing:0.05rem">Total cuota devengada ( [03] + [06] + [09] + [11] + [13] + [15] + [18] + [21] + [24] + [26])</span><span style="position:static;color:#9a9a9a">............................................................................................................................................................................................................................</span></div>
<div style="left:409.3rem;top:224.55rem;width:11.2rem;height:7.12rem;background:#7ba7dc;border:.55rem solid #0c1c33"></div>
<svg style="left:409.7rem;top:224.95rem;width:2.6rem;height:2.6rem" viewBox="0 0 10 10"><path d="M0 0h10l-10 10z" fill="#1e7b3c"/></svg>
<span class="t" style="top:225.18rem;font-size:5.3rem;line-height:6.36rem;color:#000;font-weight:bold;left:315.1rem;width:200rem;text-align:center;">27</span>
<div style="left:420.5rem;top:224.65rem;width:44.1rem;height:7.02rem;background:#fffde6;border:.3rem solid #c9c9c0"></div>
<span class="t" style="top:225.18rem;font-size:5.3rem;line-height:6.36rem;color:#9a9a9a;left:263.6rem;width:200rem;text-align:right;">85.759,60</span>
<div class="cell" style="left:76.7rem;top:238.49rem;width:218.9rem;height:7.22rem;font-size:5.3rem;line-height:7.42rem;font-weight:bold;">IVA Deducible</div>
<span class="t" style="top:238.77rem;font-size:5.3rem;line-height:6.36rem;color:#000;left:299.3rem;">Base Imponible</span>
<span class="t" style="top:238.77rem;font-size:5.3rem;line-height:6.36rem;color:#000;left:409.9rem;">Cuota</span>
<div class="cell" style="left:76.7rem;top:245.41rem;width:218.9rem;height:7.22rem;font-size:5.3rem;line-height:7.42rem;">Por cuotas soportadas en operaciones interiores corrientes<span style="position:static;color:#9a9a9a">............................................................................................................................................................................................................................</span></div>
<div style="left:298.7rem;top:245.31rem;width:11.2rem;height:7.12rem;background:#7ba7dc;border:.55rem solid #0c1c33"></div>
<svg style="left:299.1rem;top:245.71rem;width:2.6rem;height:2.6rem" viewBox="0 0 10 10"><path d="M0 0h10l-10 10z" fill="#1e7b3c"/></svg>
<span class="t" style="top:245.94rem;font-size:5.3rem;line-height:6.36rem;color:#000;font-weight:bold;left:204.5rem;width:200rem;text-align:center;">28</span>
<div style="left:309.9rem;top:245.41rem;width:43.9rem;height:7.02rem;background:#fffde6;border:.3rem solid #c9c9c0"></div>
<span class="t" style="top:245.94rem;font-size:5.3rem;line-height:6.36rem;color:#9a9a9a;left:152.8rem;width:200rem;text-align:right;">72.272,43</span>
<div style="left:409.3rem;top:245.31rem;width:11.2rem;height:7.12rem;background:#7ba7dc;border:.55rem solid #0c1c33"></div>
<svg style="left:409.7rem;top:245.71rem;width:2.6rem;height:2.6rem" viewBox="0 0 10 10"><path d="M0 0h10l-10 10z" fill="#1e7b3c"/></svg>
<span class="t" style="top:245.94rem;font-size:5.3rem;line-height:6.36rem;color:#000;font-weight:bold;left:315.1rem;width:200rem;text-align:center;">29</span>
<div style="left:420.5rem;top:245.41rem;width:44.1rem;height:7.02rem;background:#fffde6;border:.3rem solid #c9c9c0"></div>
<span class="t" style="top:245.94rem;font-size:5.3rem;line-height:6.36rem;color:#9a9a9a;left:263.6rem;width:200rem;text-align:right;">14.937,77</span>
<div class="cell" style="left:76.7rem;top:252.33rem;width:218.9rem;height:7.22rem;font-size:5.3rem;line-height:7.42rem;">Por cuotas soportadas en operaciones interiores con bienes de inversión<span style="position:static;color:#9a9a9a">............................................................................................................................................................................................................................</span></div>
<div style="left:298.7rem;top:252.23rem;width:11.2rem;height:7.12rem;background:#7ba7dc;border:.55rem solid #0c1c33"></div>
<svg style="left:299.1rem;top:252.63rem;width:2.6rem;height:2.6rem" viewBox="0 0 10 10"><path d="M0 0h10l-10 10z" fill="#1e7b3c"/></svg>
<span class="t" style="top:252.86rem;font-size:5.3rem;line-height:6.36rem;color:#000;font-weight:bold;left:204.5rem;width:200rem;text-align:center;">30</span>
<div style="left:309.9rem;top:252.33rem;width:43.9rem;height:7.02rem;background:#fffde6;border:.3rem solid #c9c9c0"></div>
<span class="t" style="top:252.86rem;font-size:5.3rem;line-height:6.36rem;color:#9a9a9a;left:152.8rem;width:200rem;text-align:right;">0,00</span>
<div style="left:409.3rem;top:252.23rem;width:11.2rem;height:7.12rem;background:#7ba7dc;border:.55rem solid #0c1c33"></div>
<svg style="left:409.7rem;top:252.63rem;width:2.6rem;height:2.6rem" viewBox="0 0 10 10"><path d="M0 0h10l-10 10z" fill="#1e7b3c"/></svg>
<span class="t" style="top:252.86rem;font-size:5.3rem;line-height:6.36rem;color:#000;font-weight:bold;left:315.1rem;width:200rem;text-align:center;">31</span>
<div style="left:420.5rem;top:252.33rem;width:44.1rem;height:7.02rem;background:#fffde6;border:.3rem solid #c9c9c0"></div>
<span class="t" style="top:252.86rem;font-size:5.3rem;line-height:6.36rem;color:#9a9a9a;left:263.6rem;width:200rem;text-align:right;">0,00</span>
<div class="cell" style="left:76.7rem;top:259.25rem;width:218.9rem;height:7.22rem;font-size:5.3rem;line-height:7.42rem;">Por cuotas soportadas en las importaciones de bienes corrientes<span style="position:static;color:#9a9a9a">............................................................................................................................................................................................................................</span></div>
<div style="left:298.7rem;top:259.15rem;width:11.2rem;height:7.12rem;background:#7ba7dc;border:.55rem solid #0c1c33"></div>
<svg style="left:299.1rem;top:259.55rem;width:2.6rem;height:2.6rem" viewBox="0 0 10 10"><path d="M0 0h10l-10 10z" fill="#1e7b3c"/></svg>
<span class="t" style="top:259.78rem;font-size:5.3rem;line-height:6.36rem;color:#000;font-weight:bold;left:204.5rem;width:200rem;text-align:center;">32</span>
<div style="left:309.9rem;top:259.25rem;width:43.9rem;height:7.02rem;background:#fffde6;border:.3rem solid #c9c9c0"></div>
<span class="t" style="top:259.78rem;font-size:5.3rem;line-height:6.36rem;color:#9a9a9a;left:152.8rem;width:200rem;text-align:right;">0,00</span>
<div style="left:409.3rem;top:259.15rem;width:11.2rem;height:7.12rem;background:#7ba7dc;border:.55rem solid #0c1c33"></div>
<svg style="left:409.7rem;top:259.55rem;width:2.6rem;height:2.6rem" viewBox="0 0 10 10"><path d="M0 0h10l-10 10z" fill="#1e7b3c"/></svg>
<span class="t" style="top:259.78rem;font-size:5.3rem;line-height:6.36rem;color:#000;font-weight:bold;left:315.1rem;width:200rem;text-align:center;">33</span>
<div style="left:420.5rem;top:259.25rem;width:44.1rem;height:7.02rem;background:#fffde6;border:.3rem solid #c9c9c0"></div>
<span class="t" style="top:259.78rem;font-size:5.3rem;line-height:6.36rem;color:#9a9a9a;left:263.6rem;width:200rem;text-align:right;">0,00</span>
<div class="cell" style="left:76.7rem;top:266.17rem;width:218.9rem;height:7.22rem;font-size:5.3rem;line-height:7.42rem;">Por cuotas soportadas en las importaciones de bienes de inversión<span style="position:static;color:#9a9a9a">............................................................................................................................................................................................................................</span></div>
<div style="left:298.7rem;top:266.07rem;width:11.2rem;height:7.12rem;background:#7ba7dc;border:.55rem solid #0c1c33"></div>
<svg style="left:299.1rem;top:266.47rem;width:2.6rem;height:2.6rem" viewBox="0 0 10 10"><path d="M0 0h10l-10 10z" fill="#1e7b3c"/></svg>
<span class="t" style="top:266.7rem;font-size:5.3rem;line-height:6.36rem;color:#000;font-weight:bold;left:204.5rem;width:200rem;text-align:center;">34</span>
<div style="left:309.9rem;top:266.17rem;width:43.9rem;height:7.02rem;background:#fffde6;border:.3rem solid #c9c9c0"></div>
<span class="t" style="top:266.7rem;font-size:5.3rem;line-height:6.36rem;color:#9a9a9a;left:152.8rem;width:200rem;text-align:right;">0,00</span>
<div style="left:409.3rem;top:266.07rem;width:11.2rem;height:7.12rem;background:#7ba7dc;border:.55rem solid #0c1c33"></div>
<svg style="left:409.7rem;top:266.47rem;width:2.6rem;height:2.6rem" viewBox="0 0 10 10"><path d="M0 0h10l-10 10z" fill="#1e7b3c"/></svg>
<span class="t" style="top:266.7rem;font-size:5.3rem;line-height:6.36rem;color:#000;font-weight:bold;left:315.1rem;width:200rem;text-align:center;">35</span>
<div style="left:420.5rem;top:266.17rem;width:44.1rem;height:7.02rem;background:#fffde6;border:.3rem solid #c9c9c0"></div>
<span class="t" style="top:266.7rem;font-size:5.3rem;line-height:6.36rem;color:#9a9a9a;left:263.6rem;width:200rem;text-align:right;">0,00</span>
<div class="cell" style="left:76.7rem;top:273.09rem;width:218.9rem;height:7.22rem;font-size:5.3rem;line-height:7.42rem;">En adquisiciones intracomunitarias de bienes y servicios corrientes<span style="position:static;color:#9a9a9a">............................................................................................................................................................................................................................</span></div>
<div style="left:298.7rem;top:272.99rem;width:11.2rem;height:7.12rem;background:#7ba7dc;border:.55rem solid #0c1c33"></div>
<svg style="left:299.1rem;top:273.39rem;width:2.6rem;height:2.6rem" viewBox="0 0 10 10"><path d="M0 0h10l-10 10z" fill="#1e7b3c"/></svg>
<span class="t" style="top:273.62rem;font-size:5.3rem;line-height:6.36rem;color:#000;font-weight:bold;left:204.5rem;width:200rem;text-align:center;">36</span>
<div style="left:309.9rem;top:273.09rem;width:43.9rem;height:7.02rem;background:#fffde6;border:.3rem solid #c9c9c0"></div>
<span class="t" style="top:273.62rem;font-size:5.3rem;line-height:6.36rem;color:#9a9a9a;left:152.8rem;width:200rem;text-align:right;">174.313,00</span>
<div style="left:409.3rem;top:272.99rem;width:11.2rem;height:7.12rem;background:#7ba7dc;border:.55rem solid #0c1c33"></div>
<svg style="left:409.7rem;top:273.39rem;width:2.6rem;height:2.6rem" viewBox="0 0 10 10"><path d="M0 0h10l-10 10z" fill="#1e7b3c"/></svg>
<span class="t" style="top:273.62rem;font-size:5.3rem;line-height:6.36rem;color:#000;font-weight:bold;left:315.1rem;width:200rem;text-align:center;">37</span>
<div style="left:420.5rem;top:273.09rem;width:44.1rem;height:7.02rem;background:#fffde6;border:.3rem solid #c9c9c0"></div>
<span class="t" style="top:273.62rem;font-size:5.3rem;line-height:6.36rem;color:#9a9a9a;left:263.6rem;width:200rem;text-align:right;">36.605,73</span>
<div class="cell" style="left:76.7rem;top:280.01rem;width:218.9rem;height:7.22rem;font-size:5.3rem;line-height:7.42rem;">En adquisiciones intracomunitarias de bienes de inversión<span style="position:static;color:#9a9a9a">............................................................................................................................................................................................................................</span></div>
<div style="left:298.7rem;top:279.91rem;width:11.2rem;height:7.12rem;background:#7ba7dc;border:.55rem solid #0c1c33"></div>
<svg style="left:299.1rem;top:280.31rem;width:2.6rem;height:2.6rem" viewBox="0 0 10 10"><path d="M0 0h10l-10 10z" fill="#1e7b3c"/></svg>
<span class="t" style="top:280.54rem;font-size:5.3rem;line-height:6.36rem;color:#000;font-weight:bold;left:204.5rem;width:200rem;text-align:center;">38</span>
<div style="left:309.9rem;top:280.01rem;width:43.9rem;height:7.02rem;background:#fffde6;border:.3rem solid #c9c9c0"></div>
<span class="t" style="top:280.54rem;font-size:5.3rem;line-height:6.36rem;color:#9a9a9a;left:152.8rem;width:200rem;text-align:right;">0,00</span>
<div style="left:409.3rem;top:279.91rem;width:11.2rem;height:7.12rem;background:#7ba7dc;border:.55rem solid #0c1c33"></div>
<svg style="left:409.7rem;top:280.31rem;width:2.6rem;height:2.6rem" viewBox="0 0 10 10"><path d="M0 0h10l-10 10z" fill="#1e7b3c"/></svg>
<span class="t" style="top:280.54rem;font-size:5.3rem;line-height:6.36rem;color:#000;font-weight:bold;left:315.1rem;width:200rem;text-align:center;">39</span>
<div style="left:420.5rem;top:280.01rem;width:44.1rem;height:7.02rem;background:#fffde6;border:.3rem solid #c9c9c0"></div>
<span class="t" style="top:280.54rem;font-size:5.3rem;line-height:6.36rem;color:#9a9a9a;left:263.6rem;width:200rem;text-align:right;">0,00</span>
<div class="cell" style="left:76.7rem;top:286.93rem;width:218.9rem;height:7.22rem;font-size:5.3rem;line-height:7.42rem;">Rectificación de deducciones<span style="position:static;color:#9a9a9a">............................................................................................................................................................................................................................</span></div>
<div style="left:298.7rem;top:286.83rem;width:11.2rem;height:7.12rem;background:#7ba7dc;border:.55rem solid #0c1c33"></div>
<svg style="left:299.1rem;top:287.23rem;width:2.6rem;height:2.6rem" viewBox="0 0 10 10"><path d="M0 0h10l-10 10z" fill="#1e7b3c"/></svg>
<span class="t" style="top:287.46rem;font-size:5.3rem;line-height:6.36rem;color:#000;font-weight:bold;left:204.5rem;width:200rem;text-align:center;">40</span>
<div style="left:309.9rem;top:286.93rem;width:43.9rem;height:7.02rem;background:#fffde6;border:.3rem solid #c9c9c0"></div>
<span class="t" style="top:287.46rem;font-size:5.3rem;line-height:6.36rem;color:#9a9a9a;left:152.8rem;width:200rem;text-align:right;">0,00</span>
<div style="left:409.3rem;top:286.83rem;width:11.2rem;height:7.12rem;background:#7ba7dc;border:.55rem solid #0c1c33"></div>
<svg style="left:409.7rem;top:287.23rem;width:2.6rem;height:2.6rem" viewBox="0 0 10 10"><path d="M0 0h10l-10 10z" fill="#1e7b3c"/></svg>
<span class="t" style="top:287.46rem;font-size:5.3rem;line-height:6.36rem;color:#000;font-weight:bold;left:315.1rem;width:200rem;text-align:center;">41</span>
<div style="left:420.5rem;top:286.93rem;width:44.1rem;height:7.02rem;background:#fffde6;border:.3rem solid #c9c9c0"></div>
<span class="t" style="top:287.46rem;font-size:5.3rem;line-height:6.36rem;color:#9a9a9a;left:263.6rem;width:200rem;text-align:right;">0,00</span>
<div class="cell" style="left:76.7rem;top:293.85rem;width:218.9rem;height:7.22rem;font-size:5.3rem;line-height:7.42rem;">Compensaciones Régimen Especial A.G. y P<span style="position:static;color:#9a9a9a">............................................................................................................................................................................................................................</span></div>
<div style="left:409.3rem;top:293.75rem;width:11.2rem;height:7.12rem;background:#7ba7dc;border:.55rem solid #0c1c33"></div>
<svg style="left:409.7rem;top:294.15rem;width:2.6rem;height:2.6rem" viewBox="0 0 10 10"><path d="M0 0h10l-10 10z" fill="#1e7b3c"/></svg>
<span class="t" style="top:294.38rem;font-size:5.3rem;line-height:6.36rem;color:#000;font-weight:bold;left:315.1rem;width:200rem;text-align:center;">42</span>
<div style="left:420.5rem;top:293.85rem;width:44.1rem;height:7.02rem;background:#fffde6;border:.3rem solid #c9c9c0"></div>
<span class="t" style="top:294.38rem;font-size:5.3rem;line-height:6.36rem;color:#9a9a9a;left:263.6rem;width:200rem;text-align:right;">0,00</span>
<div class="cell" style="left:76.7rem;top:300.77rem;width:218.9rem;height:7.22rem;font-size:5.3rem;line-height:7.42rem;">Regularización inversiones<span style="position:static;color:#9a9a9a">............................................................................................................................................................................................................................</span></div>
<div style="left:409.3rem;top:300.67rem;width:11.2rem;height:7.12rem;background:#7ba7dc;border:.55rem solid #0c1c33"></div>
<svg style="left:409.7rem;top:301.07rem;width:2.6rem;height:2.6rem" viewBox="0 0 10 10"><path d="M0 0h10l-10 10z" fill="#1e7b3c"/></svg>
<span class="t" style="top:301.3rem;font-size:5.3rem;line-height:6.36rem;color:#000;font-weight:bold;left:315.1rem;width:200rem;text-align:center;">43</span>
<div style="left:420.5rem;top:300.77rem;width:44.1rem;height:7.02rem;background:#fffde6;border:.3rem solid #c9c9c0"></div>
<span class="t" style="top:301.3rem;font-size:5.3rem;line-height:6.36rem;color:#9a9a9a;left:263.6rem;width:200rem;text-align:right;">0,00</span>
<div class="cell" style="left:76.7rem;top:307.69rem;width:218.9rem;height:7.22rem;font-size:5.3rem;line-height:7.42rem;">Regularización por aplicación del porcentaje definitivo de prorrata<span style="position:static;color:#9a9a9a">............................................................................................................................................................................................................................</span></div>
<div style="left:409.3rem;top:307.59rem;width:11.2rem;height:7.12rem;background:#7ba7dc;border:.55rem solid #0c1c33"></div>
<svg style="left:409.7rem;top:307.99rem;width:2.6rem;height:2.6rem" viewBox="0 0 10 10"><path d="M0 0h10l-10 10z" fill="#1e7b3c"/></svg>
<span class="t" style="top:308.22rem;font-size:5.3rem;line-height:6.36rem;color:#000;font-weight:bold;left:315.1rem;width:200rem;text-align:center;">44</span>
<div style="left:420.5rem;top:307.69rem;width:44.1rem;height:7.02rem;background:#fffde6;border:.3rem solid #c9c9c0"></div>
<span class="t" style="top:308.22rem;font-size:5.3rem;line-height:6.36rem;color:#9a9a9a;left:263.6rem;width:200rem;text-align:right;">0,00</span>
<div class="cell" style="left:76.7rem;top:314.61rem;width:218.9rem;height:7.22rem;font-size:5.3rem;line-height:7.42rem;"><span style="position:static;letter-spacing:0.07rem">Total a deducir ( [29] + [31] + [33] + [35] + [37] + [39] + [41] + [42] + [43] + [44] )</span><span style="position:static;color:#9a9a9a">............................................................................................................................................................................................................................</span></div>
<div style="left:409.3rem;top:314.51rem;width:11.2rem;height:7.12rem;background:#7ba7dc;border:.55rem solid #0c1c33"></div>
<svg style="left:409.7rem;top:314.91rem;width:2.6rem;height:2.6rem" viewBox="0 0 10 10"><path d="M0 0h10l-10 10z" fill="#1e7b3c"/></svg>
<span class="t" style="top:315.14rem;font-size:5.3rem;line-height:6.36rem;color:#000;font-weight:bold;left:315.1rem;width:200rem;text-align:center;">45</span>
<div style="left:420.5rem;top:314.61rem;width:44.1rem;height:7.02rem;background:#fffde6;border:.3rem solid #c9c9c0"></div>
<span class="t" style="top:315.14rem;font-size:5.3rem;line-height:6.36rem;color:#9a9a9a;left:263.6rem;width:200rem;text-align:right;">51.543,50</span>
<div class="cell" style="left:76.7rem;top:321.53rem;width:218.9rem;height:7.22rem;font-size:5.3rem;line-height:7.42rem;">Resultado régimen general ( [27] - [45] )<span style="position:static;color:#9a9a9a">............................................................................................................................................................................................................................</span></div>
<div style="left:409.3rem;top:321.43rem;width:11.2rem;height:7.12rem;background:#7ba7dc;border:.55rem solid #0c1c33"></div>
<svg style="left:409.7rem;top:321.83rem;width:2.6rem;height:2.6rem" viewBox="0 0 10 10"><path d="M0 0h10l-10 10z" fill="#1e7b3c"/></svg>
<span class="t" style="top:322.06rem;font-size:5.3rem;line-height:6.36rem;color:#000;font-weight:bold;left:315.1rem;width:200rem;text-align:center;">46</span>
<div style="left:420.5rem;top:321.53rem;width:44.1rem;height:7.02rem;background:#fffde6;border:.3rem solid #c9c9c0"></div>
<span class="t" style="top:322.06rem;font-size:5.3rem;line-height:6.36rem;color:#9a9a9a;left:263.6rem;width:200rem;text-align:right;">34.216,10</span>
<div class="cell" style="left:76.7rem;top:352.89rem;width:330.9rem;height:7.22rem;font-size:5.3rem;line-height:7.42rem;">Entregas intracomunitarias de bienes y servicios<span style="position:static;color:#9a9a9a">............................................................................................................................................................................................................................</span></div>
<div style="left:409.3rem;top:352.79rem;width:11.2rem;height:7.12rem;background:#7ba7dc;border:.55rem solid #0c1c33"></div>
<svg style="left:409.7rem;top:353.19rem;width:2.6rem;height:2.6rem" viewBox="0 0 10 10"><path d="M0 0h10l-10 10z" fill="#1e7b3c"/></svg>
<span class="t" style="top:353.42rem;font-size:5.3rem;line-height:6.36rem;color:#000;font-weight:bold;left:315.1rem;width:200rem;text-align:center;">59</span>
<div style="left:420.5rem;top:352.89rem;width:44.1rem;height:7.02rem;background:#fffde6;border:.3rem solid #c9c9c0"></div>
<span class="t" style="top:353.42rem;font-size:5.3rem;line-height:6.36rem;color:#9a9a9a;left:263.6rem;width:200rem;text-align:right;">50.100,00</span>
<div class="cell" style="left:76.7rem;top:359.81rem;width:330.9rem;height:7.22rem;font-size:5.3rem;line-height:7.42rem;">Exportaciones y operaciones asimiladas<span style="position:static;color:#9a9a9a">............................................................................................................................................................................................................................</span></div>
<div style="left:409.3rem;top:359.71rem;width:11.2rem;height:7.12rem;background:#7ba7dc;border:.55rem solid #0c1c33"></div>
<svg style="left:409.7rem;top:360.11rem;width:2.6rem;height:2.6rem" viewBox="0 0 10 10"><path d="M0 0h10l-10 10z" fill="#1e7b3c"/></svg>
<span class="t" style="top:360.34rem;font-size:5.3rem;line-height:6.36rem;color:#000;font-weight:bold;left:315.1rem;width:200rem;text-align:center;">60</span>
<div style="left:420.5rem;top:359.81rem;width:44.1rem;height:7.02rem;background:#fffde6;border:.3rem solid #c9c9c0"></div>
<span class="t" style="top:360.34rem;font-size:5.3rem;line-height:6.36rem;color:#9a9a9a;left:263.6rem;width:200rem;text-align:right;">0,00</span>
<div class="cell" style="left:76.7rem;top:366.73rem;width:330.9rem;height:7.22rem;font-size:5.3rem;line-height:7.42rem;">Operaciones no sujetas o con inversion del sujeto pasivo que originan el derecho a devolución<span style="position:static;color:#9a9a9a">............................................................................................................................................................................................................................</span></div>
<div style="left:409.3rem;top:366.63rem;width:11.2rem;height:7.12rem;background:#7ba7dc;border:.55rem solid #0c1c33"></div>
<svg style="left:409.7rem;top:367.03rem;width:2.6rem;height:2.6rem" viewBox="0 0 10 10"><path d="M0 0h10l-10 10z" fill="#1e7b3c"/></svg>
<span class="t" style="top:367.26rem;font-size:5.3rem;line-height:6.36rem;color:#000;font-weight:bold;left:315.1rem;width:200rem;text-align:center;">61</span>
<div style="left:420.5rem;top:366.73rem;width:44.1rem;height:7.02rem;background:#fffde6;border:.3rem solid #c9c9c0"></div>
<span class="t" style="top:367.26rem;font-size:5.3rem;line-height:6.36rem;color:#9a9a9a;left:263.6rem;width:200rem;text-align:right;">11.545,00</span>
<div class="cell" style="left:76.7rem;top:380.57rem;width:330.9rem;height:7.22rem;font-size:4.85rem;line-height:7.42rem;font-weight:bold;">Exclusivamente para aquellos sujetos pasivos acogidos al régimen especial del criterio de caja</div>
<div class="cell" style="left:76.7rem;top:387.49rem;width:330.9rem;height:7.22rem;font-size:4.85rem;line-height:7.42rem;font-weight:bold;">y para aquellos que sean destinatarios de operaciones afectadas por el mismo:</div>
<span class="t" style="top:394.69rem;font-size:5.3rem;line-height:6.36rem;color:#000;left:299.3rem;">Base Imponible</span>
<span class="t" style="top:394.69rem;font-size:5.3rem;line-height:6.36rem;color:#000;left:409.9rem;">Cuota</span>
<div class="cell" style="left:76.7rem;top:401.33rem;width:218.9rem;height:7.22rem;font-size:5.3rem;line-height:7.42rem;">Importes de las entregas de bienes y prestaciones de servicios a las que habiéndoles sido<span style="position:static;color:#9a9a9a">............................................................................................................................................................................................................................</span></div>
<div style="left:298.7rem;top:401.23rem;width:11.2rem;height:7.12rem;background:#7ba7dc;border:.55rem solid #0c1c33"></div>
<svg style="left:299.1rem;top:401.63rem;width:2.6rem;height:2.6rem" viewBox="0 0 10 10"><path d="M0 0h10l-10 10z" fill="#1e7b3c"/></svg>
<span class="t" style="top:401.86rem;font-size:5.3rem;line-height:6.36rem;color:#000;font-weight:bold;left:204.5rem;width:200rem;text-align:center;">62</span>
<div style="left:309.9rem;top:401.33rem;width:43.9rem;height:7.02rem;background:#fffde6;border:.3rem solid #c9c9c0"></div>
<span class="t" style="top:401.86rem;font-size:5.3rem;line-height:6.36rem;color:#9a9a9a;left:152.8rem;width:200rem;text-align:right;">0,00</span>
<div style="left:409.3rem;top:401.23rem;width:11.2rem;height:7.12rem;background:#7ba7dc;border:.55rem solid #0c1c33"></div>
<svg style="left:409.7rem;top:401.63rem;width:2.6rem;height:2.6rem" viewBox="0 0 10 10"><path d="M0 0h10l-10 10z" fill="#1e7b3c"/></svg>
<span class="t" style="top:401.86rem;font-size:5.3rem;line-height:6.36rem;color:#000;font-weight:bold;left:315.1rem;width:200rem;text-align:center;">63</span>
<div style="left:420.5rem;top:401.33rem;width:44.1rem;height:7.02rem;background:#fffde6;border:.3rem solid #c9c9c0"></div>
<span class="t" style="top:401.86rem;font-size:5.3rem;line-height:6.36rem;color:#9a9a9a;left:263.6rem;width:200rem;text-align:right;">0,00</span>
</div>
<div style="left:74.9rem;top:53.6rem;width:224rem;height:7.8rem;border:.75rem solid #217346"></div>
<div style="left:297.9rem;top:60.5rem;width:1.8rem;height:1.8rem;background:#217346;border:.3rem solid #fff"></div>
<div style="left:467.5rem;top:47.9rem;width:9.1rem;height:357.6rem;background:#d4d4d4;"></div>
<div style="left:468.9rem;top:54.2rem;width:6.4rem;height:345.2rem;background:#cfcfcf;"></div>
<div style="left:468.9rem;top:54.2rem;width:6.4rem;height:312.4rem;background:#fff;border:.35rem solid #c6c6c6"></div>
<div style="left:468.9rem;top:48.7rem;width:6.4rem;height:5.4rem;background:#fff;border:.35rem solid #c6c6c6"></div>
<span class="t" style="top:49.14rem;font-size:3.6rem;line-height:4.32rem;color:#444;left:372.1rem;width:200rem;text-align:center;">▴</span>
<div style="left:468.9rem;top:399.6rem;width:6.4rem;height:5.3rem;background:#fff;border:.35rem solid #c6c6c6"></div>
<span class="t" style="top:399.94rem;font-size:3.6rem;line-height:4.32rem;color:#444;left:372.1rem;width:200rem;text-align:center;">▾</span>
<div style="left:65.8rem;top:405.5rem;width:410.7rem;height:10.6rem;background:#e6e6e6;"></div>
<div style="left:65.8rem;top:405.3rem;width:410.7rem;height:0.4rem;background:#c6c6c6;"></div>
<span class="t s" style="top:408.98rem;font-size:3.2rem;line-height:3.84rem;color:#b9b9b9;left:-23rem;width:200rem;text-align:center;">◀</span>
<span class="t s" style="top:408.98rem;font-size:3.2rem;line-height:3.84rem;color:#1e6b41;left:-11.4rem;width:200rem;text-align:center;">▶</span>
<div style="left:106.2rem;top:405.5rem;width:39.8rem;height:10.8rem;background:#fff;"></div>
<div style="left:106.2rem;top:415rem;width:39.8rem;height:1.3rem;background:#217346;"></div>
<span class="t" style="top:407.34rem;font-size:5.1rem;line-height:6.12rem;color:#217346;font-weight:bold;left:111.1rem;letter-spacing:0.23rem;">Modelo 303</span>
<span class="t" style="top:407.54rem;font-size:5.1rem;line-height:6.12rem;color:#444;left:150.7rem;letter-spacing:-0.14rem;">Casilla 1</span>
<span class="t" style="top:407.54rem;font-size:5.1rem;line-height:6.12rem;color:#444;left:181.5rem;letter-spacing:-0.14rem;">Casilla 4</span>
<span class="t" style="top:407.54rem;font-size:5.1rem;line-height:6.12rem;color:#444;left:212.6rem;letter-spacing:-0.14rem;">Casilla 7</span>
<span class="t" style="top:407.54rem;font-size:5.1rem;line-height:6.12rem;color:#444;left:242.3rem;letter-spacing:-0.01rem;">Casilla 10</span>
<span class="t" style="top:407.54rem;font-size:5.1rem;line-height:6.12rem;color:#444;left:275.6rem;letter-spacing:-0.32rem;">Cas</span>
<div style="left:174.9rem;top:407.5rem;width:0.4rem;height:6.9rem;background:#ababab;"></div>
<div style="left:206.2rem;top:407.5rem;width:0.4rem;height:6.9rem;background:#ababab;"></div>
<div style="left:237.3rem;top:407.5rem;width:0.4rem;height:6.9rem;background:#ababab;"></div>
<div style="left:271.1rem;top:407.5rem;width:0.4rem;height:6.9rem;background:#ababab;"></div>
<div style="left:285rem;top:405.6rem;width:11rem;height:10.6rem;background:#e6e6e6;"></div>
<span class="t" style="top:407.4rem;font-size:5rem;line-height:6rem;color:#217346;font-weight:bold;left:189.4rem;width:200rem;text-align:center;">...</span>
<div style="left:297.2rem;top:407.7rem;width:6.2rem;height:6.2rem;border:.5rem solid #555;border-radius:50%"></div>
<div style="left:298.8rem;top:410.55rem;width:3rem;height:0.5rem;background:#555;"></div>
<div style="left:300.05rem;top:409.3rem;width:0.5rem;height:3rem;background:#555;"></div>
<div style="left:312.1rem;top:408.6rem;width:0.7rem;height:0.8rem;background:#9a9a9a;"></div>
<div style="left:312.1rem;top:410.5rem;width:0.7rem;height:0.8rem;background:#9a9a9a;"></div>
<div style="left:312.1rem;top:412.4rem;width:0.7rem;height:0.8rem;background:#9a9a9a;"></div>
<div style="left:318.6rem;top:407.5rem;width:6.4rem;height:6.6rem;background:#fff;border:.35rem solid #ababab;border-radius:.8rem"></div>
<span class="t s" style="top:409.36rem;font-size:2.4rem;line-height:2.88rem;color:#6e6e6e;left:221.7rem;width:200rem;text-align:center;">◀</span>
<div style="left:445.2rem;top:407.8rem;width:16.6rem;height:6rem;background:#d6d6d6;border-radius:0 .8rem .8rem 0"></div>
<div style="left:326.2rem;top:407.7rem;width:118.6rem;height:6.2rem;background:#fff;border:.3rem solid #d0d0d0"></div>
<div style="left:462.2rem;top:407.5rem;width:5.6rem;height:6.6rem;background:#fff;border:.35rem solid #ababab;border-radius:.8rem"></div>
<span class="t s" style="top:409.36rem;font-size:2.4rem;line-height:2.88rem;color:#6e6e6e;left:365.1rem;width:200rem;text-align:center;">▶</span>
<div style="left:65.8rem;top:416.1rem;width:410.7rem;height:8.7rem;background:#f3f2f1;"></div>
<div style="left:65.8rem;top:415.9rem;width:410.7rem;height:0.4rem;background:#d4d4d4;"></div>
<span class="t" style="top:418.44rem;font-size:4.6rem;line-height:5.52rem;color:#444;left:68.2rem;letter-spacing:-0.06rem;">Listo</span>
<div style="left:350.2rem;top:417.4rem;width:13.4rem;height:7rem;background:#d2d2d2;"></div>
<svg style="left:354rem;top:418.4rem;width:6rem;height:5rem" viewBox="0 0 60 50"><rect x="3" y="3" width="54" height="44" fill="none" stroke="#555" stroke-width="5"/><path d="M3 18h54M3 32h54M22 3v44M40 3v44" stroke="#555" stroke-width="4"/></svg>
<svg style="left:370.2rem;top:418.4rem;width:6rem;height:5rem" viewBox="0 0 60 50"><rect x="3" y="3" width="54" height="44" fill="none" stroke="#555" stroke-width="5"/><rect x="16" y="14" width="28" height="22" fill="none" stroke="#555" stroke-width="4"/></svg>
<svg style="left:386.2rem;top:418.4rem;width:6rem;height:5rem" viewBox="0 0 60 50"><rect x="3" y="3" width="54" height="44" fill="none" stroke="#555" stroke-width="5"/><path d="M30 3v20h-27M18 47v-12h24" fill="none" stroke="#555" stroke-width="4"/></svg>
<div style="left:400rem;top:420.7rem;width:3rem;height:0.5rem;background:#555;"></div>
<div style="left:406.5rem;top:420.75rem;width:38.5rem;height:0.4rem;background:#9a9a9a;"></div>
<div style="left:424.7rem;top:418.2rem;width:1.8rem;height:5.6rem;background:#555;"></div>
<div style="left:447.6rem;top:420.7rem;width:3.4rem;height:0.5rem;background:#555;"></div>
<div style="left:449.05rem;top:419.2rem;width:0.5rem;height:3.5rem;background:#555;"></div>
<span class="t" style="top:418.44rem;font-size:4.6rem;line-height:5.52rem;color:#5a5a5a;left:457.2rem;letter-spacing:-0.21rem;-webkit-text-stroke:0;">100 %</span>
</div>
</div>
</body></html>
